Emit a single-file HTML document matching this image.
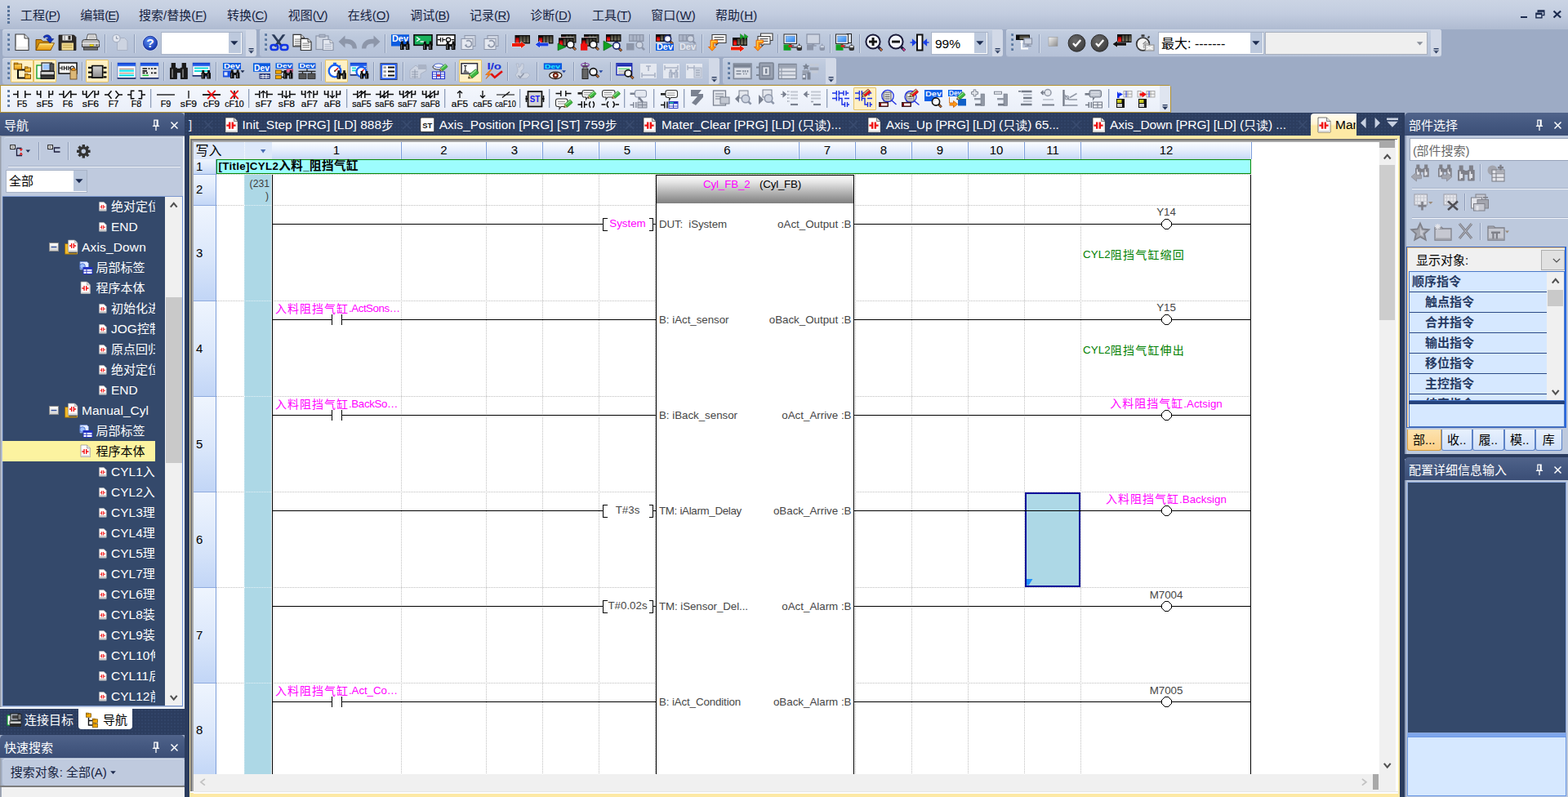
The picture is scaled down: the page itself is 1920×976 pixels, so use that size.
<!DOCTYPE html>
<html lang="zh"><head><meta charset="utf-8"><title>GX Works3</title><style>
html,body{margin:0;padding:0}
html{overflow:hidden;width:1920px;height:976px}
body{width:1920px;height:976px;overflow:hidden;position:relative;background:#9dabc5;font-family:"Liberation Sans","Noto Sans CJK SC",sans-serif}
.a{position:absolute;display:block}
.t{position:absolute;display:flex;align-items:center;white-space:pre;line-height:1}
.t span{display:block;line-height:1}
u{text-decoration:underline;text-underline-offset:1.5px;text-decoration-thickness:1px}
svg{overflow:visible}
</style></head><body><div class="a" style="left:0px;top:0px;width:1920px;height:36px;background:linear-gradient(#cbd4e4,#c3cde0 45%,#afbbd1)"></div><div class="a" style="left:8.9px;top:7px;width:2.8px;height:2.8px;background:#587399;"></div><div class="a" style="left:8.9px;top:12px;width:2.8px;height:2.8px;background:#587399;"></div><div class="a" style="left:8.9px;top:17px;width:2.8px;height:2.8px;background:#587399;"></div><div class="a" style="left:8.9px;top:21.5px;width:2.8px;height:2.8px;background:#587399;"></div><div class="a" style="left:8.9px;top:26px;width:2.8px;height:2.8px;background:#587399;"></div><div class="t" style="left:25px;top:8px;height:21px;color:#16223f"><span style="font-size:15px;">工程</span><span style="font-size:15px;letter-spacing:-0.57px;">(<u>P</u>)</span></div><div class="t" style="left:98.3px;top:8px;height:21px;color:#16223f"><span style="font-size:15px;">编辑</span><span style="font-size:15px;letter-spacing:-1px;">(<u>E</u>)</span></div><div class="t" style="left:170px;top:8px;height:21px;color:#16223f"><span style="font-size:15px;">搜索</span><span style="font-size:15px;letter-spacing:-0.01px;">/</span><span style="font-size:15px;">替换</span><span style="font-size:15px;letter-spacing:-0.01px;">(<u>F</u>)</span></div><div class="t" style="left:278px;top:8px;height:21px;color:#16223f"><span style="font-size:15px;">转换</span><span style="font-size:15px;letter-spacing:-0.51px;">(<u>C</u>)</span></div><div class="t" style="left:352.7px;top:8px;height:21px;color:#16223f"><span style="font-size:15px;">视图</span><span style="font-size:15px;letter-spacing:-0.57px;">(<u>V</u>)</span></div><div class="t" style="left:425.7px;top:8px;height:21px;color:#16223f"><span style="font-size:15px;">在线</span><span style="font-size:15px;letter-spacing:-0.02px;">(<u>O</u>)</span></div><div class="t" style="left:502.3px;top:8px;height:21px;color:#16223f"><span style="font-size:15px;">调试</span><span style="font-size:15px;letter-spacing:-0.77px;">(<u>B</u>)</span></div><div class="t" style="left:575px;top:8px;height:21px;color:#16223f"><span style="font-size:15px;">记录</span><span style="font-size:15px;letter-spacing:-0.61px;">(<u>R</u>)</span></div><div class="t" style="left:649.3px;top:8px;height:21px;color:#16223f"><span style="font-size:15px;">诊断</span><span style="font-size:15px;letter-spacing:-0.27px;">(<u>D</u>)</span></div><div class="t" style="left:725px;top:8px;height:21px;color:#16223f"><span style="font-size:15px;">工具</span><span style="font-size:15px;letter-spacing:-0.48px;">(<u>T</u>)</span></div><div class="t" style="left:797.3px;top:8px;height:21px;color:#16223f"><span style="font-size:15px;">窗口</span><span style="font-size:15px;letter-spacing:0.08px;">(<u>W</u>)</span></div><div class="t" style="left:876px;top:8px;height:21px;color:#16223f"><span style="font-size:15px;">帮助</span><span style="font-size:15px;letter-spacing:0.16px;">(<u>H</u>)</span></div><div class="a" style="left:1862px;top:20px;width:8px;height:2.4px;background:#1b2a4e;"></div><svg class="a" style="left:1880px;top:12px" width="12" height="11" fill="none" stroke="#1b2a4e" stroke-width="1.4"><path d="M3.2 3.2V1h7.6v5.6H8.4"/><path d="M3.2 1.8h7.6" stroke-width="2"/><rect x="0.9" y="4.2" width="7" height="5.6"/><path d="M.9 5h7" stroke-width="2"/></svg><svg class="a" style="left:1901px;top:12px" width="12" height="11" stroke="#1b2a4e" stroke-width="2.2"><path d="M1.5 1.5l8.6 8M10.1 1.5l-8.6 8"/></svg><svg width="0" height="0" style="position:absolute"><defs><linearGradient id="plcr" x1="0" y1="0" x2="0" y2="1"><stop offset="0" stop-color="#7a0000"/><stop offset=".55" stop-color="#f01010"/><stop offset="1" stop-color="#ff2a1a"/></linearGradient><linearGradient id="plcb" x1="0" y1="0" x2="0" y2="1"><stop offset="0" stop-color="#3c3a30"/><stop offset="1" stop-color="#77735f"/></linearGradient><linearGradient id="scr" x1="0" y1="0" x2="1" y2="1"><stop offset="0" stop-color="#8cc6ff"/><stop offset="1" stop-color="#2f86f0"/></linearGradient><linearGradient id="fold" x1="0" y1="0" x2="0" y2="1"><stop offset="0" stop-color="#ffd75e"/><stop offset="1" stop-color="#e69a12"/></linearGradient><radialGradient id="helpb" cx=".4" cy=".35" r=".7"><stop offset="0" stop-color="#5d8df5"/><stop offset="1" stop-color="#1232a8"/></radialGradient><radialGradient id="chk" cx=".4" cy=".35" r=".75"><stop offset="0" stop-color="#6a6a6a"/><stop offset="1" stop-color="#3a3a3a"/></radialGradient><linearGradient id="sq" x1="0" y1="0" x2="1" y2="1"><stop offset="0" stop-color="#f4f4f4"/><stop offset="1" stop-color="#8a8a8a"/></linearGradient><linearGradient id="sq2" x1="0" y1="0" x2="0" y2="1"><stop offset="0" stop-color="#d2d2d2"/><stop offset="1" stop-color="#8c8c8c"/></linearGradient><linearGradient id="sq3" x1="0" y1="0" x2="0" y2="1"><stop offset="0" stop-color="#ffffff"/><stop offset="1" stop-color="#cfcfcf"/></linearGradient><linearGradient id="wt" x1="0" y1="0" x2="0" y2="1"><stop offset="0" stop-color="#0a3ad0"/><stop offset="1" stop-color="#3f7cf2"/></linearGradient></defs></svg><div class="a" style="left:3px;top:36px;width:311px;height:32.5px;background:linear-gradient(#c5cfe1,#bcc8dc 30%,#b6c2d8);border-radius:3px;box-shadow:inset 0 1px #d0d9e8,0 1px #a7b3ca"></div><div class="a" style="left:301px;top:36px;width:13px;height:32.5px;background:#d2d9e7;border-radius:0 3px 3px 0"></div><svg class="a" style="left:303.5px;top:58.5px" width="8" height="7" viewBox="0 0 8 7"><rect x="0.6" y="0" width="6" height="1.3" fill="#27385c"/><path d="M0 2.6h7.2L3.6 6.4z" fill="#27385c"/><path d="M0.8 3L6.4 3" stroke="#e8ecf4" stroke-width="0.6" fill="none"/></svg><div class="a" style="left:318px;top:36px;width:910px;height:32.5px;background:linear-gradient(#c5cfe1,#bcc8dc 30%,#b6c2d8);border-radius:3px;box-shadow:inset 0 1px #d0d9e8,0 1px #a7b3ca"></div><div class="a" style="left:1215px;top:36px;width:13px;height:32.5px;background:#d2d9e7;border-radius:0 3px 3px 0"></div><svg class="a" style="left:1217.5px;top:58.5px" width="8" height="7" viewBox="0 0 8 7"><rect x="0.6" y="0" width="6" height="1.3" fill="#27385c"/><path d="M0 2.6h7.2L3.6 6.4z" fill="#27385c"/><path d="M0.8 3L6.4 3" stroke="#e8ecf4" stroke-width="0.6" fill="none"/></svg><div class="a" style="left:1232px;top:36px;width:533px;height:32.5px;background:linear-gradient(#c5cfe1,#bcc8dc 30%,#b6c2d8);border-radius:3px;box-shadow:inset 0 1px #d0d9e8,0 1px #a7b3ca"></div><div class="a" style="left:1752px;top:36px;width:13px;height:32.5px;background:#d2d9e7;border-radius:0 3px 3px 0"></div><svg class="a" style="left:1754.5px;top:58.5px" width="8" height="7" viewBox="0 0 8 7"><rect x="0.6" y="0" width="6" height="1.3" fill="#27385c"/><path d="M0 2.6h7.2L3.6 6.4z" fill="#27385c"/><path d="M0.8 3L6.4 3" stroke="#e8ecf4" stroke-width="0.6" fill="none"/></svg><div class="a" style="left:8.9px;top:41.3px;width:3px;height:3px;background:#587399;box-shadow:inset 1px 1px #6f8bb0"></div><div class="a" style="left:8.9px;top:47.2px;width:3px;height:3px;background:#587399;box-shadow:inset 1px 1px #6f8bb0"></div><div class="a" style="left:8.9px;top:53.1px;width:3px;height:3px;background:#587399;box-shadow:inset 1px 1px #6f8bb0"></div><div class="a" style="left:8.9px;top:59px;width:3px;height:3px;background:#587399;box-shadow:inset 1px 1px #6f8bb0"></div><div class="a" style="left:324px;top:41.3px;width:3px;height:3px;background:#587399;box-shadow:inset 1px 1px #6f8bb0"></div><div class="a" style="left:324px;top:47.2px;width:3px;height:3px;background:#587399;box-shadow:inset 1px 1px #6f8bb0"></div><div class="a" style="left:324px;top:53.1px;width:3px;height:3px;background:#587399;box-shadow:inset 1px 1px #6f8bb0"></div><div class="a" style="left:324px;top:59px;width:3px;height:3px;background:#587399;box-shadow:inset 1px 1px #6f8bb0"></div><div class="a" style="left:1238px;top:41.3px;width:3px;height:3px;background:#587399;box-shadow:inset 1px 1px #6f8bb0"></div><div class="a" style="left:1238px;top:47.2px;width:3px;height:3px;background:#587399;box-shadow:inset 1px 1px #6f8bb0"></div><div class="a" style="left:1238px;top:53.1px;width:3px;height:3px;background:#587399;box-shadow:inset 1px 1px #6f8bb0"></div><div class="a" style="left:1238px;top:59px;width:3px;height:3px;background:#587399;box-shadow:inset 1px 1px #6f8bb0"></div><svg class="a" style="left:13px;top:37px" width="28" height="32" viewBox="0 0 28 32"><path d="M6 5h11l5 5v14.5h-16z" fill="#fff" stroke="#3a3a3a" stroke-width="1.2"/><path d="M17 5v5h5" fill="#e6e6e6" stroke="#3a3a3a" stroke-width="0.96"/><rect x="6.6" y="20" width="14.8" height="4" fill="#e9e9e9" opacity="0.8"/></svg><svg class="a" style="left:41px;top:37px" width="28" height="32" viewBox="0 0 28 32"><path d="M3 11.5h6.5l2 2.2h9.5v10.8H3z" fill="#d08a08" stroke="#6b4208" stroke-width="0.9"/><path d="M3 24.5L7 15.8h18.5L21 24.5z" fill="url(#fold)" stroke="#7a4e06" stroke-width="0.9"/><path d="M7.6 17h16.2" fill="none" stroke="#fff0b0" stroke-width="0.9"/><path d="M12 8.2C15.5 4 21.2 5.4 22 10.6h2.8l-4.6 5.2-4.4-5.2h2.6C18 8 15.2 7.4 13.4 9.8z" fill="#1234c0" stroke="#061a70" stroke-width="0.6"/></svg><svg class="a" style="left:69px;top:37px" width="28" height="32" viewBox="0 0 28 32"><path d="M3 6h18.5L24 8.5V24.5H3z" fill="#2e2a27" stroke="#0c0a08" stroke-width="0.7"/><rect x="7.5" y="6.3" width="11.5" height="6.2" fill="#e6e6e6"/><rect x="9.5" y="6.3" width="1.4" height="6.2" fill="#9a9a9a"/><rect x="14.5" y="7" width="3" height="4.6" fill="#2e2a27"/><rect x="6.5" y="15.5" width="14.5" height="9" fill="#f3dc92"/><path d="M8 18.2L19.5 18.2" stroke="#b89b45" stroke-width="1" fill="none"/><path d="M8 21L19.5 21" stroke="#b89b45" stroke-width="1" fill="none"/></svg><svg class="a" style="left:97px;top:37px" width="28" height="32" viewBox="0 0 28 32"><path d="M9 11.5L10.5 5h10L21.5 11.5z" fill="#fff" stroke="#444" stroke-width="0.9"/><path d="M11.5 7.2L19.5 7.2" stroke="#888" stroke-width="0.9" fill="none"/><path d="M11.2 9.4L20 9.4" stroke="#888" stroke-width="0.9" fill="none"/><path d="M3.5 14.5Q3.5 11.5 6.5 11.5h15Q24.5 11.5 24.5 14.5v6h-21z" fill="#b9b9b9" stroke="#3c3c3c" stroke-width="1"/><rect x="3.5" y="15.5" width="21" height="1.5" fill="#e6e6e6"/><rect x="5.5" y="20.5" width="17" height="3.6" fill="#6c6c6c" stroke="#2c2c2c" stroke-width="0.8"/><rect x="13" y="17.6" width="4.4" height="2" fill="#ffe600" stroke="#8a7a00" stroke-width="0.5"/><circle cx="21.5" cy="18.3" r="1" fill="#444"/></svg><div class="a" style="left:128px;top:42px;width:1px;height:23px;background:#8f9db8"></div><div class="a" style="left:129px;top:42px;width:1px;height:23px;background:#d3dbe8"></div><svg class="a" style="left:133px;top:37px" width="28" height="32" viewBox="0 0 28 32"><path d="M10.5 9.5h9l3.5 3.5v11.5h-12.5z" fill="#cdd4e1" stroke="#aab3c5" stroke-width="1"/><circle cx="9.5" cy="10" r="4.6" fill="#e4e8f0" stroke="#aab3c5" stroke-width="1.4"/><path d="M9.5 7.5v2.8h2.4" fill="none" stroke="#8d96a9" stroke-width="1.1"/></svg><div class="a" style="left:164px;top:42px;width:1px;height:23px;background:#8f9db8"></div><div class="a" style="left:165px;top:42px;width:1px;height:23px;background:#d3dbe8"></div><svg class="a" style="left:169px;top:37px" width="28" height="32" viewBox="0 0 28 32"><circle cx="15" cy="15.8" r="9.8" fill="#d6e0f6"/><circle cx="15" cy="15.8" r="8.6" fill="url(#helpb)" stroke="#0d2488" stroke-width="0.8"/><text x="15" y="21.3" font-size="15.5" fill="#fff" font-family="Liberation Sans,sans-serif" font-weight="bold" text-anchor="middle">?</text></svg><div class="a" style="left:197px;top:38.5px;width:99.5px;height:28px;background:#fff;border:1px solid #a8b3c7;box-sizing:border-box"></div><div class="a" style="left:279.5px;top:40px;width:15.5px;height:25px;background:#bdc9dd"></div><svg class="a" style="left:282.3px;top:50px" width="10" height="6" viewBox="0 0 10 6"><path d="M.3 .3h9.2L4.9 5.2z" fill="#1b2a4e"/></svg><svg class="a" style="left:328px;top:37px" width="28" height="32" viewBox="0 0 28 32"><path d="M4.6 5.3L8 5.3 18.5 19.5 16 20.8z" fill="#2b3b58"/><path d="M21.4 5.3L18 5.3 7.5 19.5 10 20.8z" fill="#2b3b58"/><rect x="3.6" y="18" width="8.6" height="6" fill="none" stroke="#1236e6" stroke-width="2.6" rx="2.8"/><rect x="15.8" y="18" width="8.6" height="6" fill="none" stroke="#1236e6" stroke-width="2.6" rx="2.8"/></svg><svg class="a" style="left:356px;top:37px" width="28" height="32" viewBox="0 0 28 32"><path d="M3 5.3h9.5l4 4v10.5h-13.5z" fill="#fff" stroke="#333" stroke-width="1.2"/><path d="M12.5 5.3v4h4" fill="#e6e6e6" stroke="#333" stroke-width="0.96"/><path d="M5 11.1L14.5 11.1" stroke="#7a7a7a" stroke-width="1" fill="none"/><path d="M5 13.5L14.5 13.5" stroke="#7a7a7a" stroke-width="1" fill="none"/><path d="M5 15.9L14.5 15.9" stroke="#7a7a7a" stroke-width="1" fill="none"/><path d="M5 18.3L14.5 18.3" stroke="#7a7a7a" stroke-width="1" fill="none"/><path d="M12.3 10.3h8.7l4 4v10.2h-12.7z" fill="#fff" stroke="#333" stroke-width="1.2"/><path d="M21 10.3v4h4" fill="#e6e6e6" stroke="#333" stroke-width="0.96"/><path d="M14.3 16.1L23 16.1" stroke="#7a7a7a" stroke-width="1" fill="none"/><path d="M14.3 18.5L23 18.5" stroke="#7a7a7a" stroke-width="1" fill="none"/><path d="M14.3 20.9L23 20.9" stroke="#7a7a7a" stroke-width="1" fill="none"/></svg><svg class="a" style="left:384px;top:37px" width="28" height="32" viewBox="0 0 28 32"><rect x="3" y="7" width="15" height="16.5" fill="#cdd4e1" stroke="#8d96a9" stroke-width="1.2"/><rect x="7" y="5.2" width="7" height="3.4" fill="#aab3c5" stroke="#8d96a9" stroke-width="0.9"/><path d="M11.5 11.5h8.5l4 4v9h-12.5z" fill="#e4e8f0" stroke="#8d96a9" stroke-width="1.2"/><path d="M20 11.5v4h4" fill="#e6e6e6" stroke="#8d96a9" stroke-width="0.96"/><path d="M13.5 17.3L22 17.3" stroke="#aab3c5" stroke-width="1" fill="none"/><path d="M13.5 19.7L22 19.7" stroke="#aab3c5" stroke-width="1" fill="none"/><path d="M13.5 22.1L22 22.1" stroke="#aab3c5" stroke-width="1" fill="none"/></svg><svg class="a" style="left:412px;top:37px" width="28" height="32" viewBox="0 0 28 32"><path d="M2.5 14L10.5 6.5v4.3C19 10 25 14.5 25 22.5h-5.3C19.5 18 16 16 10.5 16.5V21.5z" fill="#8d96a9"/></svg><svg class="a" style="left:440px;top:37px" width="28" height="32" viewBox="0 0 28 32"><g transform="translate(28 0) scale(-1 1)"><path d="M2.5 14L10.5 6.5v4.3C19 10 25 14.5 25 22.5h-5.3C19.5 18 16 16 10.5 16.5V21.5z" fill="#8d96a9"/></g></svg><div class="a" style="left:471px;top:42px;width:1px;height:23px;background:#8f9db8"></div><div class="a" style="left:472px;top:42px;width:1px;height:23px;background:#d3dbe8"></div><svg class="a" style="left:476px;top:37px" width="28" height="32" viewBox="0 0 28 32"><rect x="3" y="5.3" width="22" height="9.5" fill="#0b5be0"/><text x="4" y="13.9" font-size="10" fill="#fff" font-family="Liberation Sans,sans-serif" font-weight="bold" textLength="20" lengthAdjust="spacingAndGlyphs">Dev</text><rect x="3" y="14" width="22" height="5.5" fill="#0b5be0"/><rect x="14.9" y="13.5" width="2.8" height="3.6" fill="#0c0c0c"/><rect x="21.7" y="13.5" width="2.8" height="3.6" fill="#0c0c0c"/><rect x="14" y="16.5" width="4.7" height="7.5" fill="#0c0c0c" rx="0.6"/><rect x="20.8" y="16.5" width="4.7" height="7.5" fill="#0c0c0c" rx="0.6"/><rect x="18.2" y="17.1" width="3.2" height="2.8" fill="#0c0c0c"/><rect x="15.2" y="17.5" width="0.9" height="5.5" fill="#8b8b8b"/><rect x="22" y="17.5" width="0.9" height="5.5" fill="#8b8b8b"/></svg><svg class="a" style="left:504px;top:37px" width="28" height="32" viewBox="0 0 28 32"><rect x="3" y="5.8" width="22" height="12.5" fill="#19b25c" stroke="#0c0c0c" stroke-width="1.6"/><path d="M6 8.5l3.8 2.5L6 13.5" fill="none" stroke="#fff" stroke-width="1.4"/><path d="M10.5 14L17 14" stroke="#fff" stroke-width="1.4" fill="none"/><rect x="14.9" y="13.5" width="2.8" height="3.6" fill="#0c0c0c"/><rect x="21.7" y="13.5" width="2.8" height="3.6" fill="#0c0c0c"/><rect x="14" y="16.5" width="4.7" height="7.5" fill="#0c0c0c" rx="0.6"/><rect x="20.8" y="16.5" width="4.7" height="7.5" fill="#0c0c0c" rx="0.6"/><rect x="18.2" y="17.1" width="3.2" height="2.8" fill="#0c0c0c"/><rect x="15.2" y="17.5" width="0.9" height="5.5" fill="#8b8b8b"/><rect x="22" y="17.5" width="0.9" height="5.5" fill="#8b8b8b"/></svg><svg class="a" style="left:532px;top:37px" width="28" height="32" viewBox="0 0 28 32"><rect x="3" y="5.8" width="22" height="12.5" fill="#fff" stroke="#0c0c0c" stroke-width="1.6"/><path d="M4 11.7h3.5M7.5 9v5.4M10 9v5.4M10 11.7h3.5M20.5 11.7H24" fill="none" stroke="#0c0c0c" stroke-width="1.2"/><circle cx="17" cy="11.7" r="2.6" fill="none" stroke="#0c0c0c" stroke-width="1.2"/><rect x="14.9" y="13.5" width="2.8" height="3.6" fill="#0c0c0c"/><rect x="21.7" y="13.5" width="2.8" height="3.6" fill="#0c0c0c"/><rect x="14" y="16.5" width="4.7" height="7.5" fill="#0c0c0c" rx="0.6"/><rect x="20.8" y="16.5" width="4.7" height="7.5" fill="#0c0c0c" rx="0.6"/><rect x="18.2" y="17.1" width="3.2" height="2.8" fill="#0c0c0c"/><rect x="15.2" y="17.5" width="0.9" height="5.5" fill="#8b8b8b"/><rect x="22" y="17.5" width="0.9" height="5.5" fill="#8b8b8b"/></svg><svg class="a" style="left:560px;top:37px" width="28" height="32" viewBox="0 0 28 32"><rect x="9" y="6.5" width="13" height="13" fill="#cdd4e1" stroke="#8d96a9" stroke-width="1"/><rect x="5" y="10.5" width="14" height="13" fill="#e4e8f0" stroke="#8d96a9" stroke-width="1"/><path d="M11 13.5a4 4 0 1 1 -1 5l1.6-.8" fill="none" stroke="#8d96a9" stroke-width="1.6"/></svg><svg class="a" style="left:588px;top:37px" width="28" height="32" viewBox="0 0 28 32"><rect x="9" y="6.5" width="13" height="13" fill="#cdd4e1" stroke="#8d96a9" stroke-width="1"/><rect x="5" y="10.5" width="14" height="13" fill="#e4e8f0" stroke="#8d96a9" stroke-width="1"/><path d="M11 13.5a4 4 0 1 1 -1 5l1.6-.8" fill="none" stroke="#8d96a9" stroke-width="1.6"/></svg><div class="a" style="left:619px;top:42px;width:1px;height:23px;background:#8f9db8"></div><div class="a" style="left:620px;top:42px;width:1px;height:23px;background:#d3dbe8"></div><svg class="a" style="left:624px;top:37px" width="28" height="32" viewBox="0 0 28 32"><rect x="6.5" y="6" width="18.5" height="10.5" fill="#0c0c0c"/><rect x="7.4" y="9" width="4.2" height="6.7" fill="url(#plcr)"/><rect x="12.4" y="7.2" width="3.2" height="7.9" fill="url(#plcb)"/><rect x="16.5" y="7.2" width="3.2" height="7.9" fill="url(#plcb)"/><rect x="20.6" y="7.2" width="3.2" height="7.9" fill="url(#plcb)"/><path d="M3 16.1h11v-2.1l5.5 4l-5.5 4v-2.1h-11z" fill="#f01a00" stroke="#fff" stroke-width="0.9" paint-order="stroke"/></svg><svg class="a" style="left:652px;top:37px" width="28" height="32" viewBox="0 0 28 32"><rect x="7" y="6" width="18.5" height="10.5" fill="#0c0c0c"/><rect x="7.9" y="9" width="4.2" height="6.7" fill="url(#plcr)"/><rect x="12.9" y="7.2" width="3.2" height="7.9" fill="url(#plcb)"/><rect x="17" y="7.2" width="3.2" height="7.9" fill="url(#plcb)"/><rect x="21.1" y="7.2" width="3.2" height="7.9" fill="url(#plcb)"/><path d="M19.5 15.6h-10.5v-2.1l-5.5 4l5.5 4v-2.1h10.5z" fill="#1a40e6" stroke="#fff" stroke-width="0.9" paint-order="stroke"/></svg><svg class="a" style="left:680px;top:37px" width="28" height="32" viewBox="0 0 28 32"><rect x="7" y="5" width="18.5" height="10.5" fill="#0c0c0c"/><rect x="7.9" y="8" width="4.2" height="6.7" fill="url(#plcr)"/><rect x="12.9" y="6.2" width="3.2" height="7.9" fill="url(#plcb)"/><rect x="17" y="6.2" width="3.2" height="7.9" fill="url(#plcb)"/><rect x="21.1" y="6.2" width="3.2" height="7.9" fill="url(#plcb)"/><rect x="4.5" y="8.3" width="18" height="1.1" fill="#e8e8e8"/><rect x="4" y="9.3" width="18.5" height="10.5" fill="#0c0c0c"/><rect x="4.9" y="12.3" width="4.2" height="6.7" fill="url(#plcr)"/><rect x="9.9" y="10.5" width="3.2" height="7.9" fill="url(#plcb)"/><rect x="14" y="10.5" width="3.2" height="7.9" fill="url(#plcb)"/><rect x="18.1" y="10.5" width="3.2" height="7.9" fill="url(#plcb)"/><path d="M3 16.2L13 20.5 3 24.8z" fill="#10a020" stroke="#0a5a10" stroke-width="0.6"/><path d="M21.6 20.6L25 24" stroke="#2a1a10" stroke-width="3" fill="none"/><path d="M22.4 21.4L24.8 23.8" stroke="#c4733a" stroke-width="1.7" fill="none"/><circle cx="18.5" cy="17.5" r="4.3" fill="#fff" stroke="#111" stroke-width="1.6"/><path d="M16.13 17.5a2.37 2.37 0 0 1 2.37 -2.37" fill="none" stroke="#c9d2e0" stroke-width="0.9"/></svg><svg class="a" style="left:708px;top:37px" width="28" height="32" viewBox="0 0 28 32"><rect x="7" y="5" width="18.5" height="10.5" fill="#0c0c0c"/><rect x="7.9" y="8" width="4.2" height="6.7" fill="url(#plcr)"/><rect x="12.9" y="6.2" width="3.2" height="7.9" fill="url(#plcb)"/><rect x="17" y="6.2" width="3.2" height="7.9" fill="url(#plcb)"/><rect x="21.1" y="6.2" width="3.2" height="7.9" fill="url(#plcb)"/><rect x="4.5" y="8.3" width="18" height="1.1" fill="#e8e8e8"/><rect x="4" y="9.3" width="18.5" height="10.5" fill="#0c0c0c"/><rect x="4.9" y="12.3" width="4.2" height="6.7" fill="url(#plcr)"/><rect x="9.9" y="10.5" width="3.2" height="7.9" fill="url(#plcb)"/><rect x="14" y="10.5" width="3.2" height="7.9" fill="url(#plcb)"/><rect x="18.1" y="10.5" width="3.2" height="7.9" fill="url(#plcb)"/><rect x="3" y="16.5" width="8.3" height="8.2" fill="#f01010"/><path d="M21.6 20.6L25 24" stroke="#2a1a10" stroke-width="3" fill="none"/><path d="M22.4 21.4L24.8 23.8" stroke="#c4733a" stroke-width="1.7" fill="none"/><circle cx="18.5" cy="17.5" r="4.3" fill="#fff" stroke="#111" stroke-width="1.6"/><path d="M16.13 17.5a2.37 2.37 0 0 1 2.37 -2.37" fill="none" stroke="#c9d2e0" stroke-width="0.9"/></svg><svg class="a" style="left:736px;top:37px" width="28" height="32" viewBox="0 0 28 32"><rect x="6" y="5" width="18.5" height="9" fill="#0c0c0c"/><rect x="6.9" y="8" width="4.2" height="5.2" fill="url(#plcr)"/><rect x="11.9" y="6.2" width="3.2" height="6.4" fill="url(#plcb)"/><rect x="16" y="6.2" width="3.2" height="6.4" fill="url(#plcb)"/><rect x="20.1" y="6.2" width="3.2" height="6.4" fill="url(#plcb)"/><path d="M3 13L14 19 3 25z" fill="#10a020" stroke="#0a5a10" stroke-width="0.6"/><path d="M21.75 21.95L25.15 25.35" stroke="#2a1a10" stroke-width="3" fill="none"/><path d="M22.55 22.75L24.95 25.15" stroke="#c4733a" stroke-width="1.7" fill="none"/><circle cx="18.8" cy="19" r="4.1" fill="#fff" stroke="#1c2a6e" stroke-width="1.6"/><path d="M16.55 19a2.25 2.25 0 0 1 2.25 -2.25" fill="none" stroke="#c9d2e0" stroke-width="0.9"/></svg><svg class="a" style="left:764px;top:37px" width="28" height="32" viewBox="0 0 28 32"><rect x="6" y="5" width="18.5" height="9" fill="#8d96a9"/><rect x="11.8" y="6.2" width="3.1" height="6.4" fill="#aab3c5"/><rect x="15.9" y="6.2" width="3.1" height="6.4" fill="#aab3c5"/><rect x="20" y="6.2" width="3.1" height="6.4" fill="#aab3c5"/><rect x="7" y="6.2" width="3.6" height="6.4" fill="#aab3c5"/><rect x="3" y="16" width="9.5" height="8.5" fill="#8d96a9"/><path d="M21.88 20.88L25.08 24.08" stroke="#8d96a9" stroke-width="2.6" fill="none"/><circle cx="19" cy="18" r="4" fill="#cdd4e1" stroke="#8d96a9" stroke-width="1.5"/></svg><div class="a" style="left:795px;top:42px;width:1px;height:23px;background:#8f9db8"></div><div class="a" style="left:796px;top:42px;width:1px;height:23px;background:#d3dbe8"></div><svg class="a" style="left:800px;top:37px" width="28" height="32" viewBox="0 0 28 32"><rect x="3" y="5" width="18.5" height="9" fill="#0c0c0c"/><rect x="3.9" y="8" width="4.2" height="5.2" fill="url(#plcr)"/><rect x="8.9" y="6.2" width="3.2" height="6.4" fill="url(#plcb)"/><rect x="13" y="6.2" width="3.2" height="6.4" fill="url(#plcb)"/><rect x="17.1" y="6.2" width="3.2" height="6.4" fill="url(#plcb)"/><path d="M20.45 13.45L23.85 16.85" stroke="#2a1a10" stroke-width="3" fill="none"/><path d="M21.25 14.25L23.65 16.65" stroke="#c4733a" stroke-width="1.7" fill="none"/><circle cx="17.5" cy="10.5" r="4.1" fill="#fff" stroke="#1c2a6e" stroke-width="1.6"/><path d="M15.25 10.5a2.25 2.25 0 0 1 2.25 -2.25" fill="none" stroke="#c9d2e0" stroke-width="0.9"/><rect x="3" y="16.5" width="22" height="8.5" fill="#0b5be0"/><text x="4" y="24.1" font-size="10" fill="#fff" font-family="Liberation Sans,sans-serif" font-weight="bold" textLength="20" lengthAdjust="spacingAndGlyphs">Dev</text></svg><svg class="a" style="left:828px;top:37px" width="28" height="32" viewBox="0 0 28 32"><rect x="3" y="5" width="18.5" height="9" fill="#8d96a9"/><rect x="8.8" y="6.2" width="3.1" height="6.4" fill="#aab3c5"/><rect x="12.9" y="6.2" width="3.1" height="6.4" fill="#aab3c5"/><rect x="17" y="6.2" width="3.1" height="6.4" fill="#aab3c5"/><rect x="4" y="6.2" width="3.6" height="6.4" fill="#aab3c5"/><path d="M20.38 13.38L23.58 16.58" stroke="#8d96a9" stroke-width="2.6" fill="none"/><circle cx="17.5" cy="10.5" r="4" fill="#cdd4e1" stroke="#8d96a9" stroke-width="1.5"/><rect x="3" y="16.5" width="22" height="8.5" fill="#aab3c5"/><text x="4" y="24.1" font-size="10" fill="#e4e8f0" font-family="Liberation Sans,sans-serif" font-weight="bold" textLength="20" lengthAdjust="spacingAndGlyphs">Dev</text></svg><div class="a" style="left:859px;top:42px;width:1px;height:23px;background:#8f9db8"></div><div class="a" style="left:860px;top:42px;width:1px;height:23px;background:#d3dbe8"></div><svg class="a" style="left:864px;top:37px" width="28" height="32" viewBox="0 0 28 32"><path d="M8 5.5h17v10h-9.5l-2.6 2.6v-2.6h-4.9z" fill="#fff" stroke="#3a3a3a" stroke-width="1.1"/><path d="M10.5 8.7L22.5 8.7" stroke="#555" stroke-width="1.3" fill="none"/><path d="M10.5 11.6L22.5 11.6" stroke="#555" stroke-width="1.3" fill="none"/><path d="M14.5 12.2H6v8.3H3.4l4.6 4.7 4.6-4.7H10v-4.6h4.5z" fill="#ff9a10" stroke="#e05a00" stroke-width="0.8"/><path d="M7.2 13.6h6M7.4 13.6v7.5" fill="none" stroke="#ffd84a" stroke-width="1"/></svg><svg class="a" style="left:892px;top:37px" width="28" height="32" viewBox="0 0 28 32"><rect x="5" y="9" width="18" height="10" fill="#0c0c0c"/><rect x="5.9" y="12" width="4.2" height="6.2" fill="url(#plcr)"/><rect x="10.9" y="10.2" width="3.2" height="7.4" fill="url(#plcb)"/><rect x="15" y="10.2" width="3.2" height="7.4" fill="url(#plcb)"/><rect x="19.1" y="10.2" width="3.2" height="7.4" fill="url(#plcb)"/><path d="M3 20.6h11v-2.1l5.5 4l-5.5 4v-2.1h-11z" fill="#f01a00" stroke="#fff" stroke-width="0.9" paint-order="stroke"/><path d="M14.5 4.5l4.6 3.4-4.6 3.4zM19.5 4.5l4.6 3.4-4.6 3.4z" fill="#14a824" stroke="#0a6a14" stroke-width="0.4"/></svg><svg class="a" style="left:920px;top:37px" width="28" height="32" viewBox="0 0 28 32"><path d="M11.5 4h14.5v8.5h-7l-2.6 2.6v-2.6h-4.9z" fill="#fff" stroke="#3a3a3a" stroke-width="1.1"/><path d="M8 7.5h15v9.5h-7.5l-2.6 2.6v-2.6h-4.9z" fill="#fff" stroke="#3a3a3a" stroke-width="1.1"/><path d="M10.5 10.6L20.5 10.6" stroke="#555" stroke-width="1.2" fill="none"/><path d="M10.5 13.4L20.5 13.4" stroke="#555" stroke-width="1.2" fill="none"/><path d="M14.5 12.2H6v8.3H3.4l4.6 4.7 4.6-4.7H10v-4.6h4.5z" fill="#ff9a10" stroke="#e05a00" stroke-width="0.8"/><path d="M7.2 13.6h6M7.4 13.6v7.5" fill="none" stroke="#ffd84a" stroke-width="1"/></svg><div class="a" style="left:951.5px;top:42px;width:1px;height:23px;background:#8f9db8"></div><div class="a" style="left:952.5px;top:42px;width:1px;height:23px;background:#d3dbe8"></div><svg class="a" style="left:956px;top:37px" width="28" height="32" viewBox="0 0 28 32"><rect x="4" y="5" width="15.5" height="11.5" fill="#f4f6fb" stroke="#2a2a2a" stroke-width="1"/><rect x="6.2" y="7.2" width="11.1" height="7.1" fill="url(#scr)" stroke="#5a7ab0" stroke-width="0.5"/><rect x="10.25" y="17" width="3" height="1.6" fill="#555"/><rect x="7.25" y="18.3" width="9" height="1.3" fill="#444"/><path d="M3.5 17.5h8.5l-2 2.5h2.5v4.8h-9z" fill="#10a020"/><rect x="9.5" y="18.2" width="4.5" height="2.6" fill="#e02020"/><rect x="19.5" y="18.5" width="6.5" height="6.5" fill="#333" rx="2"/><rect x="20.5" y="19" width="4.5" height="2.2" fill="#ddd" rx="1"/><path d="M22.7 16.5L22.7 19" stroke="#333" stroke-width="1" fill="none"/><path d="M13 21L19.5 21" stroke="#222" stroke-width="1.2" fill="none"/></svg><svg class="a" style="left:984px;top:37px" width="28" height="32" viewBox="0 0 28 32"><rect x="4" y="5" width="15.5" height="11.5" fill="#cdd4e1" stroke="#8d96a9" stroke-width="1.3"/><rect x="10.25" y="16.5" width="3" height="2" fill="#8d96a9"/><rect x="7.75" y="18.3" width="8" height="1.4" fill="#8d96a9"/><rect x="4" y="17.5" width="8" height="7" fill="#8d96a9"/><rect x="19.5" y="18.5" width="6.5" height="6.5" fill="#8d96a9" rx="2"/><rect x="20.5" y="19" width="4.5" height="2.2" fill="#cdd4e1" rx="1"/><path d="M22.7 16.5L22.7 19" stroke="#8d96a9" stroke-width="1" fill="none"/></svg><div class="a" style="left:1015.5px;top:42px;width:1px;height:23px;background:#8f9db8"></div><div class="a" style="left:1016.5px;top:42px;width:1px;height:23px;background:#d3dbe8"></div><svg class="a" style="left:1020px;top:37px" width="28" height="32" viewBox="0 0 28 32"><rect x="17" y="4.5" width="5.5" height="11" fill="#dfe6f5" stroke="#222" stroke-width="1"/><rect x="3.5" y="5" width="15" height="11.5" fill="#f4f6fb" stroke="#2a2a2a" stroke-width="1"/><rect x="5.7" y="7.2" width="10.6" height="7.1" fill="url(#scr)" stroke="#5a7ab0" stroke-width="0.5"/><rect x="9.5" y="17" width="3" height="1.6" fill="#555"/><rect x="6.5" y="18.3" width="9" height="1.3" fill="#444"/><path d="M3.5 17.5h8.5l-2 2.5h2.5v4.8h-9z" fill="#10a020"/><rect x="9.5" y="18.2" width="4.5" height="2.6" fill="#e02020"/><rect x="19.5" y="18.5" width="6.5" height="6.5" fill="#333" rx="2"/><rect x="20.5" y="19" width="4.5" height="2.2" fill="#ddd" rx="1"/><path d="M22.7 16.5L22.7 19" stroke="#333" stroke-width="1" fill="none"/><path d="M13 21L19.5 21" stroke="#222" stroke-width="1.2" fill="none"/></svg><div class="a" style="left:1051.5px;top:42px;width:1px;height:23px;background:#8f9db8"></div><div class="a" style="left:1052.5px;top:42px;width:1px;height:23px;background:#d3dbe8"></div><svg class="a" style="left:1056px;top:37px" width="28" height="32" viewBox="0 0 28 32"><path d="M19.5 20.5L24 25" stroke="#1b1b3a" stroke-width="3.2" fill="none"/><path d="M21.5 22.5L24 25" stroke="#c4733a" stroke-width="2" fill="none"/><circle cx="13" cy="14" r="8.6" fill="#f4f6fb" stroke="#1b1b3a" stroke-width="2"/><rect x="8" y="12.6" width="10" height="2.9" fill="#151515"/><rect x="11.6" y="9" width="2.9" height="10" fill="#151515"/></svg><svg class="a" style="left:1084px;top:37px" width="28" height="32" viewBox="0 0 28 32"><path d="M19.5 20.5L24 25" stroke="#1b1b3a" stroke-width="3.2" fill="none"/><path d="M21.5 22.5L24 25" stroke="#d0408a" stroke-width="2" fill="none"/><circle cx="13" cy="14" r="8.6" fill="#f4f6fb" stroke="#1b1b3a" stroke-width="2"/><rect x="8" y="12.6" width="10" height="2.9" fill="#151515"/></svg><svg class="a" style="left:1112px;top:37px" width="28" height="32" viewBox="0 0 28 32"><rect x="11" y="5.5" width="6.5" height="19" fill="#fff" stroke="#111" stroke-width="2"/><path d="M2.5 15h5.5M5.6 11.8L9.4 15l-3.8 3.2zM25.5 15H20M22.4 11.8L18.6 15l3.8 3.2z" fill="#1a40e6" stroke="#1a40e6" stroke-width="1.4"/></svg><div class="a" style="left:1140px;top:38.5px;width:69.5px;height:28px;background:#fff;border:1px solid #a8b3c7;box-sizing:border-box"></div><div class="a" style="left:1192.5px;top:40px;width:15.5px;height:25px;background:#bdc9dd"></div><svg class="a" style="left:1195.3px;top:50px" width="10" height="6" viewBox="0 0 10 6"><path d="M.3 .3h9.2L4.9 5.2z" fill="#1b2a4e"/></svg><div class="t" style="left:1145px;top:42.75px;height:21.5px;color:#000"><span style="font-size:15.5px;">99%</span></div><svg class="a" style="left:1240px;top:37px" width="28" height="32" viewBox="0 0 28 32"><rect x="4" y="5.5" width="17" height="6.5" fill="#0c0c0c"/><rect x="8.5" y="6.6" width="11.5" height="4.3" fill="url(#plcb)"/><rect x="14" y="10" width="9.5" height="7" fill="#cdd4e1" stroke="#8d96a9" stroke-width="1.3"/><rect x="17.25" y="17" width="3" height="2" fill="#8d96a9"/><rect x="14.75" y="18.8" width="8" height="1.4" fill="#8d96a9"/><path d="M11 12.5v10h8" fill="none" stroke="#fff" stroke-width="1.8"/><path d="M8.8 15l2.2-3 2.2 3z" fill="#fff"/></svg><div class="a" style="left:1271.5px;top:42px;width:1px;height:23px;background:#8f9db8"></div><div class="a" style="left:1272.5px;top:42px;width:1px;height:23px;background:#d3dbe8"></div><svg class="a" style="left:1276px;top:37px" width="28" height="32" viewBox="0 0 28 32"><rect x="8" y="8.5" width="11" height="11" fill="url(#sq)" stroke="#9a9a9a" stroke-width="0.6"/></svg><svg class="a" style="left:1304px;top:37px" width="28" height="32" viewBox="0 0 28 32"><circle cx="14.5" cy="15.8" r="10.4" fill="url(#chk)" stroke="#2c2c2c" stroke-width="1"/><path d="M10 16l3 3.3 6.2-7.4" fill="none" stroke="#fff" stroke-width="2.3"/></svg><svg class="a" style="left:1332px;top:37px" width="28" height="32" viewBox="0 0 28 32"><circle cx="14.5" cy="15.8" r="10.4" fill="url(#chk)" stroke="#2c2c2c" stroke-width="1"/><path d="M10 16l3 3.3 6.2-7.4" fill="none" stroke="#fff" stroke-width="2.3"/></svg><svg class="a" style="left:1360px;top:37px" width="28" height="32" viewBox="0 0 28 32"><rect x="8" y="5" width="17.5" height="10" fill="#0c0c0c"/><rect x="8.9" y="8" width="4.2" height="6.2" fill="url(#plcr)"/><rect x="13.9" y="6.2" width="3.2" height="7.4" fill="url(#plcb)"/><rect x="18" y="6.2" width="3.2" height="7.4" fill="url(#plcb)"/><rect x="22.1" y="6.2" width="3.2" height="7.4" fill="url(#plcb)"/><path d="M19 15.3h-11v-2.05l-5.5 3.75l5.5 3.75v-2.05h11z" fill="#111" stroke="#eee" stroke-width="0.9" paint-order="stroke"/></svg><svg class="a" style="left:1388px;top:37px" width="28" height="32" viewBox="0 0 28 32"><circle cx="11.5" cy="17" r="7.8" fill="#f2f2f2" stroke="#3a3a3a" stroke-width="1.8"/><rect x="9.5" y="5.3" width="4" height="2.6" fill="#3a3a3a"/><path d="M17.5 9.5L19.5 7.5" stroke="#3a3a3a" stroke-width="1.8" fill="none"/><path d="M11.5 17l4-3.5" fill="none" stroke="#888" stroke-width="1.3"/><path d="M13 22a4 4 0 0 1 6-5" fill="none" stroke="#aaa" stroke-width="1.6"/><rect x="14.5" y="18" width="10.5" height="7" fill="#d9d9d9" stroke="#888" stroke-width="0.9"/><path d="M16 19.5l7.5 4M23.5 19.5l-7.5 4" fill="none" stroke="#fff" stroke-width="1.2"/></svg><div class="a" style="left:1418px;top:38.5px;width:129.5px;height:28px;background:#fff;border:1px solid #a8b3c7;box-sizing:border-box"></div><div class="a" style="left:1530.5px;top:40px;width:15.5px;height:25px;background:#bdc9dd"></div><svg class="a" style="left:1533.3px;top:50px" width="10" height="6" viewBox="0 0 10 6"><path d="M.3 .3h9.2L4.9 5.2z" fill="#1b2a4e"/></svg><div class="t" style="left:1422px;top:42.5px;height:22px;color:#000"><span style="font-size:16px;">最大</span><span style="font-size:16px;">: -------</span></div><div class="a" style="left:1549px;top:38.5px;width:199px;height:28px;background:#efefef;border:1px solid #a9b0bd;box-sizing:border-box"></div><svg class="a" style="left:1733.8px;top:50.5px" width="10" height="6" viewBox="0 0 10 6"><path d="M.8 .3h7.6L4.6 4.4z" fill="#8a8f9a"/></svg><div class="a" style="left:3px;top:71px;width:878px;height:32px;background:linear-gradient(#c5cfe1,#bcc8dc 30%,#b6c2d8);border-radius:3px;box-shadow:inset 0 1px #d0d9e8,0 1px #a7b3ca"></div><div class="a" style="left:868px;top:71px;width:13px;height:32px;background:#d2d9e7;border-radius:0 3px 3px 0"></div><svg class="a" style="left:870.5px;top:93.5px" width="8" height="7" viewBox="0 0 8 7"><rect x="0.6" y="0" width="6" height="1.3" fill="#27385c"/><path d="M0 2.6h7.2L3.6 6.4z" fill="#27385c"/><path d="M0.8 3L6.4 3" stroke="#e8ecf4" stroke-width="0.6" fill="none"/></svg><div class="a" style="left:885px;top:71px;width:139px;height:32px;background:linear-gradient(#c5cfe1,#bcc8dc 30%,#b6c2d8);border-radius:3px;box-shadow:inset 0 1px #d0d9e8,0 1px #a7b3ca"></div><div class="a" style="left:1011px;top:71px;width:13px;height:32px;background:#d2d9e7;border-radius:0 3px 3px 0"></div><svg class="a" style="left:1013.5px;top:93.5px" width="8" height="7" viewBox="0 0 8 7"><rect x="0.6" y="0" width="6" height="1.3" fill="#27385c"/><path d="M0 2.6h7.2L3.6 6.4z" fill="#27385c"/><path d="M0.8 3L6.4 3" stroke="#e8ecf4" stroke-width="0.6" fill="none"/></svg><div class="a" style="left:8.9px;top:76.1px;width:3px;height:3px;background:#587399;box-shadow:inset 1px 1px #6f8bb0"></div><div class="a" style="left:8.9px;top:82px;width:3px;height:3px;background:#587399;box-shadow:inset 1px 1px #6f8bb0"></div><div class="a" style="left:8.9px;top:87.9px;width:3px;height:3px;background:#587399;box-shadow:inset 1px 1px #6f8bb0"></div><div class="a" style="left:8.9px;top:93.8px;width:3px;height:3px;background:#587399;box-shadow:inset 1px 1px #6f8bb0"></div><div class="a" style="left:891px;top:76.1px;width:3px;height:3px;background:#587399;box-shadow:inset 1px 1px #6f8bb0"></div><div class="a" style="left:891px;top:82px;width:3px;height:3px;background:#587399;box-shadow:inset 1px 1px #6f8bb0"></div><div class="a" style="left:891px;top:87.9px;width:3px;height:3px;background:#587399;box-shadow:inset 1px 1px #6f8bb0"></div><div class="a" style="left:891px;top:93.8px;width:3px;height:3px;background:#587399;box-shadow:inset 1px 1px #6f8bb0"></div><div class="a" style="left:13px;top:73px;width:27.5px;height:27.5px;background:#fff0c4;border:1px solid #e5c365;box-sizing:border-box;border-radius:1px"></div><div class="a" style="left:41.3px;top:73px;width:27.5px;height:27.5px;background:#fff0c4;border:1px solid #e5c365;box-sizing:border-box;border-radius:1px"></div><svg class="a" style="left:13px;top:71px" width="28" height="32" viewBox="0 0 28 32"><path d="M9 14v10.4h9M9 14.5h9" fill="none" stroke="#0a0a0a" stroke-width="2"/><rect x="4.2" y="7.2" width="9.4" height="6.8" fill="url(#fold)" stroke="#7a4a00" stroke-width="0.9"/><rect x="4.2" y="6" width="4.7" height="1.8" fill="#f5b010" stroke="#7a4a00" stroke-width="0.7"/><rect x="17.5" y="12" width="7" height="5" fill="url(#fold)" stroke="#7a4a00" stroke-width="0.9"/><rect x="17.5" y="10.8" width="3.5" height="1.8" fill="#f5b010" stroke="#7a4a00" stroke-width="0.7"/><rect x="17.5" y="20.4" width="7" height="5" fill="url(#fold)" stroke="#7a4a00" stroke-width="0.9"/><rect x="17.5" y="19.2" width="3.5" height="1.8" fill="#f5b010" stroke="#7a4a00" stroke-width="0.7"/></svg><svg class="a" style="left:41px;top:71px" width="28" height="32" viewBox="0 0 28 32"><rect x="4" y="9" width="8" height="16" fill="#fff" stroke="#12a030" stroke-width="1.4"/><rect x="10" y="6" width="12.5" height="9.5" fill="#dfe8f7" stroke="#333" stroke-width="1.3"/><rect x="11.8" y="7.8" width="9" height="6" fill="#9ec8ff"/><rect x="9" y="16.5" width="16.5" height="4.5" fill="#cfcfcf" stroke="#222" stroke-width="1"/><rect x="9" y="21" width="16.5" height="4.5" fill="#3a3a3a" stroke="#111" stroke-width="1"/><rect x="20" y="7" width="5" height="9" fill="#555" stroke="#111" stroke-width="0.8"/></svg><svg class="a" style="left:69px;top:71px" width="28" height="32" viewBox="0 0 28 32"><rect x="3" y="6" width="22" height="13" fill="#fff" stroke="#0c0c0c" stroke-width="1.5"/><path d="M4 12.3h3M7 9.7v5.2M9.4 9.7v5.2M9.4 12.3h3.3M12.7 9.7v5.2M15 9.7v5.2M15 12.3h2" fill="none" stroke="#0c0c0c" stroke-width="1.1"/><circle cx="19.5" cy="12.3" r="2.3" fill="none" stroke="#0c0c0c" stroke-width="1.1"/><rect x="17" y="14.5" width="8" height="11.5" fill="#dcb878" stroke="#6b4a20" stroke-width="0.9"/><rect x="19" y="12.6" width="4" height="2.8" fill="#f08a00" stroke="#6b4a20" stroke-width="0.6"/></svg><div class="a" style="left:100px;top:76px;width:1px;height:23px;background:#8f9db8"></div><div class="a" style="left:101px;top:76px;width:1px;height:23px;background:#d3dbe8"></div><div class="a" style="left:105px;top:73px;width:27.5px;height:27.5px;background:#fff0c4;border:1px solid #e5c365;box-sizing:border-box;border-radius:1px"></div><svg class="a" style="left:105px;top:71px" width="28" height="32" viewBox="0 0 28 32"><path d="M3 11.9h4M3 17.6h4M3 23.3h4M21.5 11.9h4M21.5 17.6h4M21.5 23.3h4" fill="none" stroke="#0a0a0a" stroke-width="2.3"/><rect x="7" y="8.7" width="14.5" height="16.3" fill="#0a0a0a" rx="0.6"/><rect x="8.6" y="10.3" width="11.3" height="13" fill="url(#sq2)"/></svg><div class="a" style="left:136px;top:76px;width:1px;height:23px;background:#8f9db8"></div><div class="a" style="left:137px;top:76px;width:1px;height:23px;background:#d3dbe8"></div><svg class="a" style="left:141px;top:71px" width="28" height="32" viewBox="0 0 28 32"><rect x="3" y="6" width="22" height="19" fill="#fff" stroke="#5c74b8" stroke-width="0.7"/><rect x="3" y="6" width="22" height="4.2" fill="url(#wt)"/><rect x="2.7" y="24" width="22.6" height="1.6" fill="#1c2d6b"/><path d="M5 13.4L23 13.4" stroke="#a0705a" stroke-width="0.9" fill="none"/><rect x="5" y="14.6" width="18" height="2.2" fill="#10e0e8"/><path d="M5 18.6L23 18.6" stroke="#a0705a" stroke-width="0.9" fill="none"/><rect x="5" y="20.2" width="18" height="2.2" fill="#10e0e8"/></svg><svg class="a" style="left:169px;top:71px" width="28" height="32" viewBox="0 0 28 32"><rect x="3" y="6" width="22" height="19" fill="#fff" stroke="#5c74b8" stroke-width="0.7"/><rect x="3" y="6" width="22" height="4.2" fill="url(#wt)"/><rect x="2.7" y="24" width="22.6" height="1.6" fill="#1c2d6b"/><rect x="3.4" y="10.2" width="21.2" height="13.6" fill="#ececec"/><path d="M5.5 13h5.5M12.5 13h2M16 13h2M19.5 13h3M5.5 15.8h5.5M5.5 18.4h3M10 18.4h2M16 18.4h2M19.5 18.4h3" fill="none" stroke="#111" stroke-width="1.7"/><rect x="5.5" y="20.6" width="7.5" height="1.5" fill="#20d040"/></svg><div class="a" style="left:200px;top:76px;width:1px;height:23px;background:#8f9db8"></div><div class="a" style="left:201px;top:76px;width:1px;height:23px;background:#d3dbe8"></div><svg class="a" style="left:205px;top:71px" width="28" height="32" viewBox="0 0 28 32"><g transform="translate(3 6)"><rect x="1.71" y="0" width="5.32" height="6.84" fill="#1a1a1a"/><rect x="14.63" y="0" width="5.32" height="6.84" fill="#1a1a1a"/><rect x="0" y="5.7" width="8.93" height="14.25" fill="#1a1a1a" rx="0.6"/><rect x="12.92" y="5.7" width="8.93" height="14.25" fill="#1a1a1a" rx="0.6"/><rect x="7.98" y="6.84" width="6.08" height="5.32" fill="#1a1a1a"/><rect x="2.28" y="7.6" width="1.71" height="10.45" fill="#7a7a7a"/><rect x="15.2" y="7.6" width="1.71" height="10.45" fill="#7a7a7a"/></g></svg><svg class="a" style="left:233px;top:71px" width="28" height="32" viewBox="0 0 28 32"><rect x="3" y="6" width="21" height="16" fill="#fff" stroke="#5c74b8" stroke-width="0.7"/><rect x="3" y="6" width="21" height="4.2" fill="url(#wt)"/><rect x="2.7" y="21" width="21.6" height="1.6" fill="#1c2d6b"/><rect x="5" y="11.5" width="17" height="2" fill="#16dada"/><rect x="5" y="15" width="17" height="2" fill="#16dada"/><rect x="14.4" y="15" width="2.8" height="3.6" fill="#0c0c0c"/><rect x="21.2" y="15" width="2.8" height="3.6" fill="#0c0c0c"/><rect x="13.5" y="18" width="4.7" height="7.5" fill="#0c0c0c" rx="0.6"/><rect x="20.3" y="18" width="4.7" height="7.5" fill="#0c0c0c" rx="0.6"/><rect x="17.7" y="18.6" width="3.2" height="2.8" fill="#0c0c0c"/><rect x="14.7" y="19" width="0.9" height="5.5" fill="#8b8b8b"/><rect x="21.5" y="19" width="0.9" height="5.5" fill="#8b8b8b"/></svg><div class="a" style="left:264px;top:76px;width:1px;height:23px;background:#8f9db8"></div><div class="a" style="left:265px;top:76px;width:1px;height:23px;background:#d3dbe8"></div><svg class="a" style="left:269px;top:71px" width="37" height="32" viewBox="0 0 37 32"><rect x="4" y="6" width="22" height="8" fill="#0b5be0"/><text x="5" y="13.1" font-size="9.5" fill="#fff" font-family="Liberation Sans,sans-serif" font-weight="bold" textLength="20" lengthAdjust="spacingAndGlyphs">Dev</text><rect x="4" y="15.5" width="10" height="8" fill="#1a50e0"/><rect x="5.5" y="17.3" width="4" height="4.2" fill="#dfe8ff"/><rect x="13.9" y="14.5" width="2.8" height="3.6" fill="#0c0c0c"/><rect x="20.7" y="14.5" width="2.8" height="3.6" fill="#0c0c0c"/><rect x="13" y="17.5" width="4.7" height="7.5" fill="#0c0c0c" rx="0.6"/><rect x="19.8" y="17.5" width="4.7" height="7.5" fill="#0c0c0c" rx="0.6"/><rect x="17.2" y="18.1" width="3.2" height="2.8" fill="#0c0c0c"/><rect x="14.2" y="18.5" width="0.9" height="5.5" fill="#8b8b8b"/><rect x="21" y="18.5" width="0.9" height="5.5" fill="#8b8b8b"/><path d="M25.5 15.2h5l-2.5 3z" fill="#1b2a4e"/></svg><svg class="a" style="left:306px;top:71px" width="28" height="32" viewBox="0 0 28 32"><rect x="4" y="6.3" width="21" height="10.5" fill="#0b5be0"/><text x="5" y="15.9" font-size="10.5" fill="#fff" font-family="Liberation Sans,sans-serif" font-weight="bold" textLength="19" lengthAdjust="spacingAndGlyphs">Dev</text><rect x="11.5" y="19" width="13.5" height="6.5" fill="#2a3a7a"/><path d="M12.5 21.5h11.5M12.5 23.5h11.5M16 20v5M20 20v5" fill="none" stroke="#fff" stroke-width="0.9"/></svg><svg class="a" style="left:334px;top:71px" width="28" height="32" viewBox="0 0 28 32"><rect x="3.5" y="6.3" width="21" height="6.8" fill="#0b5be0"/><text x="4.5" y="12.2" font-size="8" fill="#fff" font-family="Liberation Sans,sans-serif" font-weight="bold" textLength="19" lengthAdjust="spacingAndGlyphs">Dev</text><path d="M10.5 17h4v6.5h-4" fill="none" stroke="#111" stroke-width="1.3"/><rect x="3.5" y="15" width="7" height="4.2" fill="#f5a800" stroke="#6b4a08" stroke-width="0.8"/><rect x="3.5" y="21.3" width="7" height="4.2" fill="#f5a800" stroke="#6b4a08" stroke-width="0.8"/><rect x="17" y="13.8" width="7.5" height="3.4" fill="#ff70a8" stroke="#7a2040" stroke-width="0.6"/><rect x="13.9" y="15" width="2.8" height="3.6" fill="#0c0c0c"/><rect x="20.7" y="15" width="2.8" height="3.6" fill="#0c0c0c"/><rect x="13" y="18" width="4.7" height="7.5" fill="#0c0c0c" rx="0.6"/><rect x="19.8" y="18" width="4.7" height="7.5" fill="#0c0c0c" rx="0.6"/><rect x="17.2" y="18.6" width="3.2" height="2.8" fill="#0c0c0c"/><rect x="14.2" y="19" width="0.9" height="5.5" fill="#8b8b8b"/><rect x="21" y="19" width="0.9" height="5.5" fill="#8b8b8b"/></svg><svg class="a" style="left:362px;top:71px" width="28" height="32" viewBox="0 0 28 32"><rect x="3.5" y="6.3" width="21" height="6.8" fill="#0b5be0"/><text x="4.5" y="12.2" font-size="8" fill="#fff" font-family="Liberation Sans,sans-serif" font-weight="bold" textLength="19" lengthAdjust="spacingAndGlyphs">Dev</text><path d="M3.5 16.3h21M8.5 16.3v3M19.5 16.3v3M14 13.2v3" fill="none" stroke="#222" stroke-width="1.3"/><rect x="4" y="19" width="9" height="6.5" fill="#555" stroke="#222" stroke-width="0.8"/><rect x="15" y="19" width="9" height="6.5" fill="#555" stroke="#222" stroke-width="0.8"/></svg><div class="a" style="left:393px;top:76px;width:1px;height:23px;background:#8f9db8"></div><div class="a" style="left:394px;top:76px;width:1px;height:23px;background:#d3dbe8"></div><div class="a" style="left:398px;top:73px;width:27.5px;height:27.5px;background:#fff0c4;border:1px solid #e5c365;box-sizing:border-box;border-radius:1px"></div><svg class="a" style="left:398px;top:71px" width="28" height="32" viewBox="0 0 28 32"><rect x="10" y="5.7" width="4" height="2.4" fill="#1a60f0"/><path d="M17.11 10.89L18.91 9.09" stroke="#1a60f0" stroke-width="1.6" fill="none"/><circle cx="12" cy="16" r="7.3" fill="#fff" stroke="#1a60f0" stroke-width="2.3"/><path d="M12 16l4.02 -3.65" fill="none" stroke="#e01010" stroke-width="1.5"/><circle cx="12" cy="16" r="1" fill="#333"/><rect x="15.4" y="15.2" width="2.8" height="3.6" fill="#0c0c0c"/><rect x="22.2" y="15.2" width="2.8" height="3.6" fill="#0c0c0c"/><rect x="14.5" y="18.2" width="4.7" height="7.5" fill="#0c0c0c" rx="0.6"/><rect x="21.3" y="18.2" width="4.7" height="7.5" fill="#0c0c0c" rx="0.6"/><rect x="18.7" y="18.8" width="3.2" height="2.8" fill="#0c0c0c"/><rect x="15.7" y="19.2" width="0.9" height="5.5" fill="#8b8b8b"/><rect x="22.5" y="19.2" width="0.9" height="5.5" fill="#8b8b8b"/></svg><svg class="a" style="left:426px;top:71px" width="28" height="32" viewBox="0 0 28 32"><rect x="3" y="6" width="20" height="15" fill="#fff" stroke="#5c74b8" stroke-width="0.7"/><rect x="3" y="6" width="20" height="4.2" fill="url(#wt)"/><rect x="2.7" y="20" width="20.6" height="1.6" fill="#1c2d6b"/><rect x="5" y="11.5" width="5" height="1.8" fill="#16dada"/><rect x="5" y="14.5" width="5" height="1.8" fill="#16dada"/><rect x="14.5" y="8" width="4" height="2.4" fill="#1a60f0"/><path d="M20.7 12.8L22.5 11" stroke="#1a60f0" stroke-width="1.6" fill="none"/><circle cx="16.5" cy="17" r="6" fill="#fff" stroke="#1a60f0" stroke-width="2.3"/><path d="M16.5 17l3.3 -3" fill="none" stroke="#e01010" stroke-width="1.5"/><circle cx="16.5" cy="17" r="1" fill="#333"/><rect x="15.81" y="16" width="2.52" height="3.24" fill="#0c0c0c"/><rect x="21.93" y="16" width="2.52" height="3.24" fill="#0c0c0c"/><rect x="15" y="18.7" width="4.23" height="6.75" fill="#0c0c0c" rx="0.6"/><rect x="21.12" y="18.7" width="4.23" height="6.75" fill="#0c0c0c" rx="0.6"/><rect x="18.78" y="19.24" width="2.88" height="2.52" fill="#0c0c0c"/><rect x="16.08" y="19.6" width="0.81" height="4.95" fill="#8b8b8b"/><rect x="22.2" y="19.6" width="0.81" height="4.95" fill="#8b8b8b"/></svg><div class="a" style="left:457px;top:76px;width:1px;height:23px;background:#8f9db8"></div><div class="a" style="left:458px;top:76px;width:1px;height:23px;background:#d3dbe8"></div><svg class="a" style="left:462px;top:71px" width="28" height="32" viewBox="0 0 28 32"><rect x="4" y="6.7" width="20" height="19.8" fill="none" stroke="#2a2a3a" stroke-width="1"/><rect x="5.2" y="7.9" width="17.6" height="17.4" fill="#fff" stroke="#2a62f0" stroke-width="2"/><path d="M13 11.5h8M13 16.5h8M13 21.5h8" fill="none" stroke="#111" stroke-width="1.8"/><rect x="7.5" y="10.3" width="3.4" height="2.6" fill="#999"/><rect x="7.5" y="15.3" width="3.4" height="2.6" fill="#999"/><rect x="7.5" y="20.3" width="3.4" height="2.6" fill="#999"/></svg><div class="a" style="left:493px;top:76px;width:1px;height:23px;background:#8f9db8"></div><div class="a" style="left:494px;top:76px;width:1px;height:23px;background:#d3dbe8"></div><svg class="a" style="left:498px;top:71px" width="28" height="32" viewBox="0 0 28 32"><path d="M4 25V15l7-6 6 4.5 7-4v6l-7 4V25z" fill="#cdd4e1" stroke="#aab3c5" stroke-width="1"/><path d="M6 17h8M6 20h8M6 23h8M10 14v11" fill="#cdd4e1" stroke="#8d96a9" stroke-width="0.9"/><rect x="14" y="8" width="10" height="6" fill="#aab3c5"/></svg><svg class="a" style="left:526px;top:71px" width="28" height="32" viewBox="0 0 28 32"><rect x="3.5" y="17" width="15" height="8.5" fill="#fff" stroke="#2030d0" stroke-width="1.1"/><path d="M3.5 20h15M3.5 22.8h15M8.5 17v8.5M13.5 17v8.5" fill="none" stroke="#2030d0" stroke-width="0.9"/><rect x="9" y="20.4" width="4" height="2" fill="#e02020"/><ellipse cx="11" cy="11" rx="7" ry="3.2" fill="#e8ecf8" stroke="#333" stroke-width="1"/><ellipse cx="11" cy="9.2" rx="5.5" ry="2.2" fill="#fff" stroke="#4060d0" stroke-width="0.9"/><g transform="translate(12.5 16) rotate(-40) scale(0.95)"><path d="M0 0L3.2 -2.3V2.3z" fill="#e8c878" stroke="#6b5a2a" stroke-width="0.5"/><path d="M0 0L1.4 -1V1z" fill="#222"/><rect x="3.2" y="-2.3" width="8.2" height="4.6" fill="#3fb83f" stroke="#1d7a1d" stroke-width="0.6" rx="0.8"/><rect x="3.4" y="-1.9" width="7.8" height="1.3" fill="#8fe08f"/></g></svg><div class="a" style="left:557px;top:76px;width:1px;height:23px;background:#8f9db8"></div><div class="a" style="left:558px;top:76px;width:1px;height:23px;background:#d3dbe8"></div><div class="a" style="left:562px;top:73px;width:27.5px;height:27.5px;background:#fff0c4;border:1px solid #e5c365;box-sizing:border-box;border-radius:1px"></div><svg class="a" style="left:562px;top:71px" width="28" height="32" viewBox="0 0 28 32"><rect x="3" y="6.7" width="19.5" height="12.5" fill="#fff" stroke="#2b2b3b" stroke-width="1.5"/><path d="M6 9.5h3.6M7.8 9.5v6.5M6 16h3.6" fill="none" stroke="#222" stroke-width="1.1"/><path d="M5.5 17.3L12 17.3" stroke="#222" stroke-width="0.9" fill="none"/><g transform="translate(11.5 25) rotate(-40) scale(1.25)"><path d="M0 0L3.2 -2.3V2.3z" fill="#e8c878" stroke="#6b5a2a" stroke-width="0.5"/><path d="M0 0L1.4 -1V1z" fill="#222"/><rect x="3.2" y="-2.3" width="8.2" height="4.6" fill="#3fb83f" stroke="#1d7a1d" stroke-width="0.6" rx="0.8"/><rect x="3.4" y="-1.9" width="7.8" height="1.3" fill="#8fe08f"/></g></svg><svg class="a" style="left:590px;top:71px" width="28" height="32" viewBox="0 0 28 32"><text x="6.5" y="14" font-size="10.5" fill="#1a30d8" font-family="Liberation Sans,sans-serif" font-weight="bold" textLength="17.5" lengthAdjust="spacingAndGlyphs">I/o</text><path d="M10.5 14.5L4.5 20.5h3.8L5 25.5l7-6.5H8.3l3.7-4.5z" fill="#ff8a1a" stroke="#c84a00" stroke-width="0.5"/><path d="M11.5 19.5l4.3 4.3 9.2-7.5" fill="none" stroke="#e01010" stroke-width="2.6"/></svg><div class="a" style="left:621px;top:76px;width:1px;height:23px;background:#8f9db8"></div><div class="a" style="left:622px;top:76px;width:1px;height:23px;background:#d3dbe8"></div><svg class="a" style="left:626px;top:71px" width="28" height="32" viewBox="0 0 28 32"><path d="M6 7h3v5l3-2.5V7h3v6l-3 3v3l8-1 3 3-4 4H8l-3-4 3-4v-3z" fill="#cdd4e1" stroke="#aab3c5" stroke-width="0.8"/><path d="M8.5 21.5l2.5 2.5 4.5-5" fill="none" stroke="#8d96a9" stroke-width="1.6"/></svg><div class="a" style="left:657px;top:76px;width:1px;height:23px;background:#8f9db8"></div><div class="a" style="left:658px;top:76px;width:1px;height:23px;background:#d3dbe8"></div><svg class="a" style="left:662px;top:71px" width="37" height="32" viewBox="0 0 37 32"><rect x="3.8" y="6.3" width="22.2" height="7.8" fill="#0b5be0"/><text x="5" y="13.2" font-size="8" fill="#20e8ff" font-family="Liberation Sans,sans-serif" font-weight="bold" textLength="19" lengthAdjust="spacingAndGlyphs">Dev</text><ellipse cx="18.3" cy="21.3" rx="7.6" ry="4.2" fill="#fff" stroke="#2a1a10" stroke-width="1.3"/><circle cx="18.3" cy="21.3" r="3.2" fill="#8a2a10" stroke="#3a1008" stroke-width="0.7"/><circle cx="18.3" cy="21.3" r="1.2" fill="#fff"/><path d="M26 15.2h5l-2.5 3z" fill="#2244a0"/></svg><div class="a" style="left:702px;top:76px;width:1px;height:23px;background:#8f9db8"></div><div class="a" style="left:703px;top:76px;width:1px;height:23px;background:#d3dbe8"></div><svg class="a" style="left:707px;top:71px" width="37" height="32" viewBox="0 0 37 32"><path d="M9.5 5v6M5 9.5h9" fill="none" stroke="#555" stroke-width="1.2"/><ellipse cx="9.5" cy="8.5" rx="4.8" ry="2" fill="none" stroke="#7a30a0" stroke-width="1.1"/><rect x="6" y="13.5" width="7" height="12" fill="#666" stroke="#222" stroke-width="1"/><rect x="7" y="11" width="5" height="2.8" fill="#999" stroke="#333" stroke-width="0.7"/><path d="M22.67 20.17L26.07 23.57" stroke="#2a1a10" stroke-width="3" fill="none"/><path d="M23.47 20.97L25.87 23.37" stroke="#c4733a" stroke-width="1.7" fill="none"/><circle cx="19.5" cy="17" r="4.4" fill="#fff" stroke="#111" stroke-width="1.6"/><path d="M17.08 17a2.42 2.42 0 0 1 2.42 -2.42" fill="none" stroke="#c9d2e0" stroke-width="0.9"/><path d="M26.3 15.2h5l-2.5 3z" fill="#2244a0"/></svg><div class="a" style="left:747px;top:76px;width:1px;height:23px;background:#8f9db8"></div><div class="a" style="left:748px;top:76px;width:1px;height:23px;background:#d3dbe8"></div><svg class="a" style="left:752px;top:71px" width="28" height="32" viewBox="0 0 28 32"><rect x="3" y="6.7" width="18.7" height="14" fill="#fff" stroke="#1a2ab0" stroke-width="1.4"/><rect x="3.6" y="7.3" width="17.5" height="3.2" fill="#1a2ab0"/><rect x="5" y="12.3" width="14" height="2" fill="#7ad890"/><path d="M5 16.2h14M5 18.6h9" fill="none" stroke="#999" stroke-width="1.2"/><path d="M20.15 21.75L23.55 25.15" stroke="#2a1a10" stroke-width="3" fill="none"/><path d="M20.95 22.55L23.35 24.95" stroke="#c4733a" stroke-width="1.7" fill="none"/><circle cx="17.2" cy="18.8" r="4.1" fill="#fff" stroke="#111" stroke-width="1.6"/><path d="M14.95 18.8a2.25 2.25 0 0 1 2.25 -2.25" fill="none" stroke="#c9d2e0" stroke-width="0.9"/></svg><svg class="a" style="left:780px;top:71px" width="28" height="32" viewBox="0 0 28 32"><rect x="4" y="7" width="20" height="18" fill="#e4e8f0"/><path d="M6 21h16M6 18v6M22 18v6M14 10v6M11 10h6" fill="none" stroke="#aab3c5" stroke-width="1.6"/></svg><svg class="a" style="left:808px;top:71px" width="28" height="32" viewBox="0 0 28 32"><rect x="4" y="7" width="20" height="18" fill="#e4e8f0"/><path d="M6 12h16M6 9v6M22 9v6" fill="none" stroke="#aab3c5" stroke-width="1.4"/><rect x="11.9" y="14" width="2.8" height="3.6" fill="#aab3c5"/><rect x="18.7" y="14" width="2.8" height="3.6" fill="#aab3c5"/><rect x="11" y="17" width="4.7" height="7.5" fill="#aab3c5" rx="0.6"/><rect x="17.8" y="17" width="4.7" height="7.5" fill="#aab3c5" rx="0.6"/><rect x="15.2" y="17.6" width="3.2" height="2.8" fill="#aab3c5"/><rect x="12.2" y="18" width="0.9" height="5.5" fill="#cdd4e1"/><rect x="19" y="18" width="0.9" height="5.5" fill="#cdd4e1"/></svg><svg class="a" style="left:836px;top:71px" width="28" height="32" viewBox="0 0 28 32"><rect x="4" y="7" width="20" height="18" fill="#e4e8f0"/><path d="M6 12h8M6 9v6M14 9v6" fill="none" stroke="#aab3c5" stroke-width="1.4"/><rect x="14" y="12" width="9" height="12" fill="#cdd4e1" stroke="#aab3c5" stroke-width="1"/><path d="M16 15h5M16 18h5M16 21h5" fill="none" stroke="#8d96a9" stroke-width="0.9"/></svg><svg class="a" style="left:894px;top:71px" width="28" height="32" viewBox="0 0 28 32"><rect x="4.3" y="7" width="21.7" height="18.5" fill="#c3c9d5" stroke="#7b8494" stroke-width="1.4"/><rect x="5" y="7.7" width="20.3" height="4" fill="#7b8494"/><rect x="6" y="13" width="18" height="10.5" fill="#dde1e9"/><path d="M7.5 16h6M16 15v2.6M18.5 15v2.6M21.5 15v2.6M7.5 19.5h6M16 19.5h1.5M19 19.5h1.5" fill="none" stroke="#7b8494" stroke-width="1.5"/></svg><svg class="a" style="left:922px;top:71px" width="28" height="32" viewBox="0 0 28 32"><rect x="8" y="6" width="17" height="20" fill="#9aa2b1" stroke="#7b8494" stroke-width="1.6" rx="1"/><rect x="11.5" y="10.5" width="9" height="11" fill="#dde1e9" stroke="#7b8494" stroke-width="1.6"/><rect x="15" y="13" width="2.4" height="6" fill="#7b8494"/><path d="M4 11.5h4M4 21h4" fill="none" stroke="#7b8494" stroke-width="2"/><rect x="8" y="24.5" width="17" height="2" fill="#7b8494"/></svg><svg class="a" style="left:950px;top:71px" width="28" height="32" viewBox="0 0 28 32"><rect x="3.5" y="7.5" width="21.5" height="18" fill="#dde1e9" stroke="#7b8494" stroke-width="1.3"/><rect x="4" y="8" width="20.5" height="3.5" fill="#9aa2b1"/><path d="M3.5 12h21.5M3.5 16.5h21.5M3.5 21h21.5M7 8v17" fill="none" stroke="#9aa2b1" stroke-width="1.3"/></svg><svg class="a" style="left:978px;top:71px" width="28" height="32" viewBox="0 0 28 32"><path d="M9 6.5l1.4 2.6 2.9.4-2.1 2 .5 2.9L9 13l-2.7 1.4.5-2.9-2.1-2 2.9-.4z" fill="#7b8494"/><rect x="13.5" y="7" width="5" height="3" fill="#c3c9d5"/><rect x="19.5" y="7" width="5" height="3" fill="#c3c9d5"/><rect x="13.5" y="11.5" width="11" height="3.6" fill="#9aa2b1"/><rect x="4.5" y="15" width="8.5" height="4.5" fill="#9aa2b1"/><rect x="4.5" y="19.5" width="4.5" height="7" fill="#7b8494"/><rect x="10.5" y="17.5" width="4" height="9" fill="#7b8494"/><rect x="5" y="21" width="3" height="3" fill="#dde1e9"/><rect x="15.5" y="15.5" width="8" height="3" fill="#c3c9d5"/></svg><div class="a" style="left:0;top:104px;width:1433.5px;height:34px;box-sizing:border-box;background:linear-gradient(#f4f7fd,#eaeff9);border:1px solid #b3912f;border-radius:0 3px 0 0"></div><div class="a" style="left:1419.5px;top:105px;width:13px;height:32px;background:#dfe5f0"></div><svg class="a" style="left:1422.5px;top:127.5px" width="8" height="7" viewBox="0 0 8 7"><rect x="0.6" y="0" width="6" height="1.3" fill="#27385c"/><path d="M0 2.6h7.2L3.6 6.4z" fill="#27385c"/></svg><div class="a" style="left:8.9px;top:110px;width:3px;height:3px;background:#587399;box-shadow:inset 1px 1px #6f8bb0"></div><div class="a" style="left:8.9px;top:116px;width:3px;height:3px;background:#587399;box-shadow:inset 1px 1px #6f8bb0"></div><div class="a" style="left:8.9px;top:122px;width:3px;height:3px;background:#587399;box-shadow:inset 1px 1px #6f8bb0"></div><div class="a" style="left:8.9px;top:128px;width:3px;height:3px;background:#587399;box-shadow:inset 1px 1px #6f8bb0"></div><svg class="a" style="left:13px;top:104px" width="28" height="34" viewBox="0 0 28 34"><g transform="translate(0 1)"><path d="M3 10.5h5.5M8.8 6v9M17.8 6v9M18 10.5h7" fill="none" stroke="#0a0a0a" stroke-width="1.5"/></g><text x="7.7" y="27.2" font-size="11" fill="#000" font-family="Liberation Sans,sans-serif" textLength="12.6" lengthAdjust="spacingAndGlyphs" stroke="#000" stroke-width=".2">F5</text></svg><svg class="a" style="left:41px;top:104px" width="28" height="34" viewBox="0 0 28 34"><g transform="translate(0 1)"><path d="M4.5 6v4.5h4M8.8 6v9M19 6v9M19.2 10.5h4.3V6" fill="none" stroke="#0a0a0a" stroke-width="1.5"/></g><text x="3.85" y="27.2" font-size="11" fill="#000" font-family="Liberation Sans,sans-serif" textLength="20.3" lengthAdjust="spacingAndGlyphs" stroke="#000" stroke-width=".2">sF5</text></svg><svg class="a" style="left:69px;top:104px" width="28" height="34" viewBox="0 0 28 34"><g transform="translate(0 1)"><path d="M3 10.5h5.5M8.8 6v9M17.8 6v9M18 10.5h7" fill="none" stroke="#0a0a0a" stroke-width="1.5"/><path d="M9.5 15L17.5 6" stroke="#0a0a0a" stroke-width="1.4" fill="none"/></g><text x="7.7" y="27.2" font-size="11" fill="#000" font-family="Liberation Sans,sans-serif" textLength="12.6" lengthAdjust="spacingAndGlyphs" stroke="#000" stroke-width=".2">F6</text></svg><svg class="a" style="left:97px;top:104px" width="28" height="34" viewBox="0 0 28 34"><g transform="translate(0 1)"><path d="M4.5 6v4.5h4M8.8 6v9M19 6v9M19.2 10.5h4.3V6" fill="none" stroke="#0a0a0a" stroke-width="1.5"/><path d="M9.5 15L17.5 6" stroke="#0a0a0a" stroke-width="1.4" fill="none"/></g><text x="3.85" y="27.2" font-size="11" fill="#000" font-family="Liberation Sans,sans-serif" textLength="20.3" lengthAdjust="spacingAndGlyphs" stroke="#000" stroke-width=".2">sF6</text></svg><svg class="a" style="left:125px;top:104px" width="28" height="34" viewBox="0 0 28 34"><g transform="translate(0 1)"><path d="M3 11h4.5M11.5 6.3L7.5 11l4 4.7M16.5 6.3l4 4.7-4 4.7M20.5 11H25" fill="none" stroke="#0a0a0a" stroke-width="1.5"/></g><text x="7.7" y="27.2" font-size="11" fill="#000" font-family="Liberation Sans,sans-serif" textLength="12.6" lengthAdjust="spacingAndGlyphs" stroke="#000" stroke-width=".2">F7</text></svg><svg class="a" style="left:153px;top:104px" width="28" height="34" viewBox="0 0 28 34"><g transform="translate(0 1)"><path d="M3 11h4.5M11.5 6.3h-4v9.4h4M16.5 6.3h4v9.4h-4M20.5 11H25" fill="none" stroke="#0a0a0a" stroke-width="1.5"/></g><text x="7.7" y="27.2" font-size="11" fill="#000" font-family="Liberation Sans,sans-serif" textLength="12.6" lengthAdjust="spacingAndGlyphs" stroke="#000" stroke-width=".2">F8</text></svg><div class="a" style="left:183.5px;top:109px;width:1px;height:23px;background:#8f9db8"></div><div class="a" style="left:184.5px;top:109px;width:1px;height:23px;background:#d3dbe8"></div><svg class="a" style="left:189px;top:104px" width="28" height="34" viewBox="0 0 28 34"><g transform="translate(0 1)"><path d="M3 11L25 11" stroke="#0a0a0a" stroke-width="1.3" fill="none"/></g><text x="7.7" y="27.2" font-size="11" fill="#000" font-family="Liberation Sans,sans-serif" textLength="12.6" lengthAdjust="spacingAndGlyphs" stroke="#000" stroke-width=".2">F9</text></svg><svg class="a" style="left:217px;top:104px" width="28" height="34" viewBox="0 0 28 34"><g transform="translate(0 1)"><path d="M14 6L14 15.5" stroke="#0a0a0a" stroke-width="1.3" fill="none"/></g><text x="3.85" y="27.2" font-size="11" fill="#000" font-family="Liberation Sans,sans-serif" textLength="20.3" lengthAdjust="spacingAndGlyphs" stroke="#000" stroke-width=".2">sF9</text></svg><svg class="a" style="left:245px;top:104px" width="28" height="34" viewBox="0 0 28 34"><g transform="translate(0 1)"><path d="M3 11L25 11" stroke="#0a0a0a" stroke-width="1.8" fill="none"/><path d="M9.2 5.8l9.6 10.4M18.8 5.8l-9.6 10.4" fill="none" stroke="#f01010" stroke-width="1.8"/></g><text x="3.85" y="27.2" font-size="11" fill="#000" font-family="Liberation Sans,sans-serif" textLength="20.3" lengthAdjust="spacingAndGlyphs" stroke="#000" stroke-width=".2">cF9</text></svg><svg class="a" style="left:273px;top:104px" width="28" height="34" viewBox="0 0 28 34"><g transform="translate(0 1)"><path d="M14 6L14 16" stroke="#0a0a0a" stroke-width="1.5" fill="none"/><path d="M9.2 5.8l9.6 10.4M18.8 5.8l-9.6 10.4" fill="none" stroke="#f01010" stroke-width="1.8"/></g><text x="2.25" y="27.2" font-size="11" fill="#000" font-family="Liberation Sans,sans-serif" textLength="23.5" lengthAdjust="spacingAndGlyphs" stroke="#000" stroke-width=".2">cF10</text></svg><div class="a" style="left:303.5px;top:109px;width:1px;height:23px;background:#8f9db8"></div><div class="a" style="left:304.5px;top:109px;width:1px;height:23px;background:#d3dbe8"></div><svg class="a" style="left:309px;top:104px" width="28" height="34" viewBox="0 0 28 34"><g transform="translate(0 1)"><path d="M3 10.5h5.5M8.8 6v9M17.8 6v9M18 10.5h7" fill="none" stroke="#0a0a0a" stroke-width="1.5"/><path d="M13.4 15V6.6M10.4 9.3l3-3 3 3" fill="none" stroke="#0a0a0a" stroke-width="1.3"/></g><text x="3.85" y="27.2" font-size="11" fill="#000" font-family="Liberation Sans,sans-serif" textLength="20.3" lengthAdjust="spacingAndGlyphs" stroke="#000" stroke-width=".2">sF7</text></svg><svg class="a" style="left:337px;top:104px" width="28" height="34" viewBox="0 0 28 34"><g transform="translate(0 1)"><path d="M3 10.5h5.5M8.8 6v9M17.8 6v9M18 10.5h7" fill="none" stroke="#0a0a0a" stroke-width="1.5"/><path d="M13.4 6v8.6M10.4 11.8l3 3 3-3" fill="none" stroke="#0a0a0a" stroke-width="1.3"/></g><text x="3.85" y="27.2" font-size="11" fill="#000" font-family="Liberation Sans,sans-serif" textLength="20.3" lengthAdjust="spacingAndGlyphs" stroke="#000" stroke-width=".2">sF8</text></svg><svg class="a" style="left:365px;top:104px" width="28" height="34" viewBox="0 0 28 34"><g transform="translate(0 1)"><path d="M4.5 6v4.5h4M8.8 6v9M19 6v9M19.2 10.5h4.3V6" fill="none" stroke="#0a0a0a" stroke-width="1.5"/><path d="M13.9 15V6.6M10.9 9.3l3-3 3 3" fill="none" stroke="#0a0a0a" stroke-width="1.3"/></g><text x="3.85" y="27.2" font-size="11" fill="#000" font-family="Liberation Sans,sans-serif" textLength="20.3" lengthAdjust="spacingAndGlyphs" stroke="#000" stroke-width=".2">aF7</text></svg><svg class="a" style="left:393px;top:104px" width="28" height="34" viewBox="0 0 28 34"><g transform="translate(0 1)"><path d="M4.5 6v4.5h4M8.8 6v9M19 6v9M19.2 10.5h4.3V6" fill="none" stroke="#0a0a0a" stroke-width="1.5"/><path d="M13.9 6v8.6M10.9 11.8l3 3 3-3" fill="none" stroke="#0a0a0a" stroke-width="1.3"/></g><text x="3.85" y="27.2" font-size="11" fill="#000" font-family="Liberation Sans,sans-serif" textLength="20.3" lengthAdjust="spacingAndGlyphs" stroke="#000" stroke-width=".2">aF8</text></svg><div class="a" style="left:423.5px;top:109px;width:1px;height:23px;background:#8f9db8"></div><div class="a" style="left:424.5px;top:109px;width:1px;height:23px;background:#d3dbe8"></div><svg class="a" style="left:429px;top:104px" width="28" height="34" viewBox="0 0 28 34"><g transform="translate(0 1)"><path d="M3 10.5h5.5M8.8 6v9M17.8 6v9M18 10.5h7" fill="none" stroke="#0a0a0a" stroke-width="1.5"/><path d="M13.4 15V6.6M10.4 9.3l3-3 3 3" fill="none" stroke="#0a0a0a" stroke-width="1.3"/><path d="M8 15L19 6" stroke="#0a0a0a" stroke-width="1.4" fill="none"/></g><text x="2.25" y="27.2" font-size="11" fill="#000" font-family="Liberation Sans,sans-serif" textLength="23.5" lengthAdjust="spacingAndGlyphs" stroke="#000" stroke-width=".2">saF5</text></svg><svg class="a" style="left:457px;top:104px" width="28" height="34" viewBox="0 0 28 34"><g transform="translate(0 1)"><path d="M3 10.5h5.5M8.8 6v9M17.8 6v9M18 10.5h7" fill="none" stroke="#0a0a0a" stroke-width="1.5"/><path d="M13.4 6v8.6M10.4 11.8l3 3 3-3" fill="none" stroke="#0a0a0a" stroke-width="1.3"/><path d="M8 15L19 6" stroke="#0a0a0a" stroke-width="1.4" fill="none"/></g><text x="2.25" y="27.2" font-size="11" fill="#000" font-family="Liberation Sans,sans-serif" textLength="23.5" lengthAdjust="spacingAndGlyphs" stroke="#000" stroke-width=".2">saF6</text></svg><svg class="a" style="left:485px;top:104px" width="28" height="34" viewBox="0 0 28 34"><g transform="translate(0 1)"><path d="M4.5 6v4.5h4M8.8 6v9M19 6v9M19.2 10.5h4.3V6" fill="none" stroke="#0a0a0a" stroke-width="1.5"/><path d="M13.9 15V6.6M10.9 9.3l3-3 3 3" fill="none" stroke="#0a0a0a" stroke-width="1.3"/><path d="M8 15L20 6" stroke="#0a0a0a" stroke-width="1.4" fill="none"/></g><text x="2.25" y="27.2" font-size="11" fill="#000" font-family="Liberation Sans,sans-serif" textLength="23.5" lengthAdjust="spacingAndGlyphs" stroke="#000" stroke-width=".2">saF7</text></svg><svg class="a" style="left:513px;top:104px" width="28" height="34" viewBox="0 0 28 34"><g transform="translate(0 1)"><path d="M4.5 6v4.5h4M8.8 6v9M19 6v9M19.2 10.5h4.3V6" fill="none" stroke="#0a0a0a" stroke-width="1.5"/><path d="M13.9 6v8.6M10.9 11.8l3 3 3-3" fill="none" stroke="#0a0a0a" stroke-width="1.3"/><path d="M8 15L20 6" stroke="#0a0a0a" stroke-width="1.4" fill="none"/></g><text x="2.25" y="27.2" font-size="11" fill="#000" font-family="Liberation Sans,sans-serif" textLength="23.5" lengthAdjust="spacingAndGlyphs" stroke="#000" stroke-width=".2">saF8</text></svg><div class="a" style="left:543.5px;top:109px;width:1px;height:23px;background:#8f9db8"></div><div class="a" style="left:544.5px;top:109px;width:1px;height:23px;background:#d3dbe8"></div><svg class="a" style="left:549px;top:104px" width="28" height="34" viewBox="0 0 28 34"><g transform="translate(0 1)"><path d="M14 15V6.6M11 9.3l3-3 3 3" fill="none" stroke="#0a0a0a" stroke-width="1.3"/></g><text x="3.85" y="27.2" font-size="11" fill="#000" font-family="Liberation Sans,sans-serif" textLength="20.3" lengthAdjust="spacingAndGlyphs" stroke="#000" stroke-width=".2">aF5</text></svg><svg class="a" style="left:577px;top:104px" width="28" height="34" viewBox="0 0 28 34"><g transform="translate(0 1)"><path d="M14 6v8.6M11 11.8l3 3 3-3" fill="none" stroke="#0a0a0a" stroke-width="1.3"/></g><text x="2.25" y="27.2" font-size="11" fill="#000" font-family="Liberation Sans,sans-serif" textLength="23.5" lengthAdjust="spacingAndGlyphs" stroke="#000" stroke-width=".2">caF5</text></svg><svg class="a" style="left:605px;top:104px" width="28" height="34" viewBox="0 0 28 34"><g transform="translate(0 1)"><path d="M3 11h22M10 14.5l9-7" fill="none" stroke="#0a0a0a" stroke-width="1.2"/></g><text x="1.25" y="27.2" font-size="11" fill="#000" font-family="Liberation Sans,sans-serif" textLength="25.5" lengthAdjust="spacingAndGlyphs" stroke="#000" stroke-width=".2">caF10</text></svg><div class="a" style="left:635.5px;top:109px;width:1px;height:23px;background:#8f9db8"></div><div class="a" style="left:636.5px;top:109px;width:1px;height:23px;background:#d3dbe8"></div><svg class="a" style="left:641px;top:104px" width="28" height="34" viewBox="0 0 28 34"><path d="M2.3 17h3M22.7 17h3M3.5 13v8M24.5 13v8" fill="none" stroke="#0a0a0a" stroke-width="1.5"/><rect x="5.5" y="8" width="17" height="18.5" fill="#d4d4d4" stroke="#0a0a0a" stroke-width="1.7"/><text x="14" y="21.3" font-size="11.5" fill="#1a20f0" font-family="Liberation Sans,sans-serif" font-weight="bold" text-anchor="middle" textLength="12.5" lengthAdjust="spacingAndGlyphs">ST</text></svg><div class="a" style="left:671.5px;top:109px;width:1px;height:23px;background:#8f9db8"></div><div class="a" style="left:672.5px;top:109px;width:1px;height:23px;background:#d3dbe8"></div><svg class="a" style="left:676px;top:105.8px" width="28" height="34" viewBox="0 0 28 34"><path d="M4.5 8.5h6M10.8 5v7M16.8 5v7M17 8.5h6.5" fill="none" stroke="#0a0a0a" stroke-width="1.4"/><path d="M6.5 15h10a2.5 2.5 0 0 1 2.5 2.5v4.5a2.5 2.5 0 0 1 -2.5 2.5h-5.5l-2 3v-3h-2a2.5 2.5 0 0 1 -2.5 -2.5v-4.5a2.5 2.5 0 0 1 2.5 -2.5z" fill="#fff" stroke="#333" stroke-width="1.1"/><path d="M7 18.5h9M7 21h9" fill="none" stroke="#888" stroke-width="0.9"/><g transform="translate(14.5 25.5) rotate(-40) scale(1.05)"><path d="M0 0L3.2 -2.3V2.3z" fill="#e8c878" stroke="#6b5a2a" stroke-width="0.5"/><path d="M0 0L1.4 -1V1z" fill="#222"/><rect x="3.2" y="-2.3" width="8.2" height="4.6" fill="#3fb83f" stroke="#1d7a1d" stroke-width="0.6" rx="0.8"/><rect x="3.4" y="-1.9" width="7.8" height="1.3" fill="#8fe08f"/></g></svg><svg class="a" style="left:704px;top:105.8px" width="28" height="34" viewBox="0 0 28 34"><rect x="3.5" y="7" width="7" height="2.6" fill="#222"/><path d="M11 4.5h10a2.5 2.5 0 0 1 2.5 2.5v3.5a2.5 2.5 0 0 1 -2.5 2.5h-5.5l-2 3v-3h-2a2.5 2.5 0 0 1 -2.5 -2.5v-3.5a2.5 2.5 0 0 1 2.5 -2.5z" fill="#fff" stroke="#333" stroke-width="1.1"/><path d="M11 7.5h9.5M11 10h9.5" fill="none" stroke="#888" stroke-width="0.9"/><g transform="translate(16 14.5) rotate(-40) scale(1)"><path d="M0 0L3.2 -2.3V2.3z" fill="#e8c878" stroke="#6b5a2a" stroke-width="0.5"/><path d="M0 0L1.4 -1V1z" fill="#222"/><rect x="3.2" y="-2.3" width="8.2" height="4.6" fill="#3fb83f" stroke="#1d7a1d" stroke-width="0.6" rx="0.8"/><rect x="3.4" y="-1.9" width="7.8" height="1.3" fill="#8fe08f"/></g><path d="M3.5 22h4.5M8.3 18v8M11.6 18v8M11.8 22h3.4M19 18.3q-3 3.7 0 7.4M22 18.3q3 3.7 0 7.4" fill="none" stroke="#0a0a0a" stroke-width="1.4"/></svg><svg class="a" style="left:733px;top:105.8px" width="28" height="34" viewBox="0 0 28 34"><path d="M6.5 4.5h11a2.5 2.5 0 0 1 2.5 2.5v3.5a2.5 2.5 0 0 1 -2.5 2.5h-6.5l-2 3v-3h-2a2.5 2.5 0 0 1 -2.5 -2.5v-3.5a2.5 2.5 0 0 1 2.5 -2.5z" fill="#fff" stroke="#333" stroke-width="1.1"/><path d="M6.5 7.5h10M6.5 10h10" fill="none" stroke="#888" stroke-width="0.9"/><g transform="translate(16.5 14.5) rotate(-40) scale(1)"><path d="M0 0L3.2 -2.3V2.3z" fill="#e8c878" stroke="#6b5a2a" stroke-width="0.5"/><path d="M0 0L1.4 -1V1z" fill="#222"/><rect x="3.2" y="-2.3" width="8.2" height="4.6" fill="#3fb83f" stroke="#1d7a1d" stroke-width="0.6" rx="0.8"/><rect x="3.4" y="-1.9" width="7.8" height="1.3" fill="#8fe08f"/></g><path d="M3.5 22h5M12 18.3q-3.5 3.7 0 7.4M17.5 18.3q3.5 3.7 0 7.4M20.5 22h4.5" fill="none" stroke="#0a0a0a" stroke-width="1.5"/></svg><div class="a" style="left:763.5px;top:109px;width:1px;height:23px;background:#8f9db8"></div><div class="a" style="left:764.5px;top:109px;width:1px;height:23px;background:#d3dbe8"></div><svg class="a" style="left:768px;top:105.8px" width="28" height="34" viewBox="0 0 28 34"><rect x="3.5" y="7.5" width="7" height="2.5" fill="#7a8190"/><path d="M11.5 4.5h9.5a2.5 2.5 0 0 1 2.5 2.5v3.5a2.5 2.5 0 0 1 -2.5 2.5h-5l-2 3v-3h-2a2.5 2.5 0 0 1 -2.5 -2.5v-3.5a2.5 2.5 0 0 1 2.5 -2.5z" fill="#e4e8f0" stroke="#8d96a9" stroke-width="1.1"/><path d="M14 13l5 6" fill="#7a8190" stroke="#7a8190" stroke-width="2.5"/><path d="M3.5 22.5h4M7.8 19v7M10.8 19v7" fill="none" stroke="#7a8190" stroke-width="1.3"/><rect x="13" y="19" width="11" height="7" fill="#c2c7d1" stroke="#7a8190" stroke-width="0.9"/><path d="M13 22.5h11M18.5 19v7" fill="none" stroke="#7a8190" stroke-width="0.9"/></svg><div class="a" style="left:799.5px;top:109px;width:1px;height:23px;background:#8f9db8"></div><div class="a" style="left:800.5px;top:109px;width:1px;height:23px;background:#d3dbe8"></div><svg class="a" style="left:805px;top:105.8px" width="28" height="34" viewBox="0 0 28 34"><rect x="4" y="8" width="7" height="2.6" fill="#222"/><path d="M12 4.5h10a2.5 2.5 0 0 1 2.5 2.5v4a2.5 2.5 0 0 1 -2.5 2.5h-5.5l-2 3v-3h-2a2.5 2.5 0 0 1 -2.5 -2.5v-4a2.5 2.5 0 0 1 2.5 -2.5z" fill="#fff" stroke="#333" stroke-width="1.1"/><path d="M12 8h9.5M12 10.5h9.5" fill="none" stroke="#888" stroke-width="0.9"/><path d="M4 22.5h4.5M8.8 18.5v8M12 18.5v8" fill="none" stroke="#0a0a0a" stroke-width="1.4"/><rect x="14" y="18.5" width="11" height="8" fill="#fff" stroke="#2030c0" stroke-width="0.9"/><rect x="14" y="18.5" width="11" height="2.8" fill="#2030c0"/><rect x="14.8" y="19" width="5" height="1.6" fill="#20c8a0"/><path d="M14 24h11M19.5 21.3v5.2" fill="none" stroke="#2030c0" stroke-width="0.9"/></svg><div class="a" style="left:836.5px;top:109px;width:1px;height:23px;background:#8f9db8"></div><div class="a" style="left:837.5px;top:109px;width:1px;height:23px;background:#d3dbe8"></div><svg class="a" style="left:841px;top:104px" width="28" height="34" viewBox="0 0 28 34"><path d="M5 6h13l-4 5h6v4l-9 10-5-3 7-8H5z" fill="#7a8190"/></svg><svg class="a" style="left:869px;top:104px" width="28" height="34" viewBox="0 0 28 34"><rect x="4.5" y="7" width="15" height="18" fill="#e4e7ed" stroke="#7a8190" stroke-width="1.3"/><path d="M7 11h10M7 14h10M7 17h6" fill="none" stroke="#7a8190" stroke-width="1.1"/><rect x="13" y="15" width="11" height="8" fill="#c2c7d1" stroke="#7a8190" stroke-width="1"/></svg><svg class="a" style="left:897px;top:104px" width="28" height="34" viewBox="0 0 28 34"><path d="M3 17l5-5v10z" fill="#7a8190"/><rect x="8" y="7" width="11" height="9" fill="#e4e7ed" stroke="#7a8190" stroke-width="1"/><path d="M19.46 20.46L22.66 23.66" stroke="#8d96a9" stroke-width="2.6" fill="none"/><circle cx="16" cy="17" r="4.8" fill="#cdd4e1" stroke="#8d96a9" stroke-width="1.5"/></svg><svg class="a" style="left:925px;top:104px" width="28" height="34" viewBox="0 0 28 34"><path d="M4 12v12l6-6z" fill="#7a8190"/><rect x="9" y="6" width="11" height="9" fill="#e4e7ed" stroke="#7a8190" stroke-width="1"/><path d="M19.46 19.96L22.66 23.16" stroke="#8d96a9" stroke-width="2.6" fill="none"/><circle cx="16" cy="16.5" r="4.8" fill="#cdd4e1" stroke="#8d96a9" stroke-width="1.5"/></svg><svg class="a" style="left:953px;top:104px" width="28" height="34" viewBox="0 0 28 34"><path d="M3 11.5h5M6 8.5l3.5 3-3.5 3z" fill="#7a8190" stroke="#7a8190" stroke-width="1.2"/><path d="M11 8h3M11 12h3M11 16h3M11 20h3" fill="none" stroke="#9aa1ae" stroke-width="1.6" stroke-dasharray="1.5 1"/><path d="M15 8.5h9M15 12.5h9M15 16.5h9" fill="none" stroke="#c2c7d1" stroke-width="2"/><path d="M15 24h9" fill="none" stroke="#7a8190" stroke-width="2.2"/></svg><svg class="a" style="left:981px;top:104px" width="28" height="34" viewBox="0 0 28 34"><path d="M10 11.5H5M7 8.5l-3.5 3 3.5 3z" fill="#7a8190" stroke="#7a8190" stroke-width="1.2"/><path d="M12 8.5h12M12 12.5h12M12 16.5h12" fill="none" stroke="#c2c7d1" stroke-width="2"/><path d="M12 20.5h3" fill="none" stroke="#9aa1ae" stroke-width="1.6"/><path d="M15 24h9" fill="none" stroke="#7a8190" stroke-width="2.2"/></svg><div class="a" style="left:1011.5px;top:109px;width:1px;height:23px;background:#8f9db8"></div><div class="a" style="left:1012.5px;top:109px;width:1px;height:23px;background:#d3dbe8"></div><svg class="a" style="left:1016px;top:104px" width="28" height="34" viewBox="0 0 28 34"><path d="M3 10h5M8.3 7v6M11.3 7v6M11.5 10h5.5M17 7v6M20 7v6M20.2 10h3M3 16.5h5M8.3 13.5v6M11.3 13.5v6M11.5 16.5h3.5v7.5h4M18.5 21v6M21.5 21v6M21.7 24h2.3M18 16.5h6" fill="none" stroke="#1a30e6" stroke-width="1.4"/></svg><div class="a" style="left:1045px;top:107px;width:27.5px;height:27.5px;background:#fff0c4;border:1px solid #e5c365;box-sizing:border-box;border-radius:1px"></div><svg class="a" style="left:1044px;top:104px" width="28" height="34" viewBox="0 0 28 34"><path d="M3 10h5M8.3 7v6M11.3 7v6M11.5 10h5.5M17 7v6M20 7v6M20.2 10h3M3 16.5h5M8.3 13.5v6M11.3 13.5v6M11.5 16.5h3.5v7.5h4M18.5 21v6M21.5 21v6M21.7 24h2.3M18 16.5h6" fill="none" stroke="#1a30e6" stroke-width="1.4"/><g transform="translate(11.5 14.5) rotate(-40) scale(1.05)"><path d="M0 0L3.2 -2.3V2.3z" fill="#e8c878" stroke="#6b5a2a" stroke-width="0.5"/><path d="M0 0L1.4 -1V1z" fill="#222"/><rect x="3.2" y="-2.3" width="8.2" height="4.6" fill="#f01818" stroke="#8a0a0a" stroke-width="0.6" rx="0.8"/><rect x="3.4" y="-1.9" width="7.8" height="1.3" fill="#8fe08f"/></g></svg><svg class="a" style="left:1073px;top:104px" width="28" height="34" viewBox="0 0 28 34"><rect x="9" y="9" width="9" height="11" fill="#e4e4e4" stroke="#555" stroke-width="1"/><path d="M10.5 12h6M10.5 14.5h6M10.5 17h6" fill="none" stroke="#555" stroke-width="1"/><circle cx="14" cy="13.5" r="7.2" fill="none" stroke="#2030e0" stroke-width="1.3"/><path d="M19 19L24.5 24" stroke="#2030e0" stroke-width="1.4" fill="none"/><rect x="3.5" y="21.5" width="11" height="5" fill="#7a0a10" stroke="#1a0406" stroke-width="0.8"/><rect x="6" y="22.5" width="7.5" height="3" fill="#f4f4f4"/></svg><svg class="a" style="left:1101px;top:104px" width="28" height="34" viewBox="0 0 28 34"><rect x="9" y="10" width="9" height="10" fill="#e4e4e4" stroke="#555" stroke-width="1"/><path d="M10.5 14.5h6M10.5 17h6" fill="none" stroke="#555" stroke-width="1"/><circle cx="14" cy="14.5" r="7" fill="none" stroke="#2030e0" stroke-width="1.3"/><path d="M19 20L24.5 24.5" stroke="#2030e0" stroke-width="1.4" fill="none"/><rect x="3.5" y="21.5" width="11" height="5" fill="#7a0a10" stroke="#1a0406" stroke-width="0.8"/><rect x="6" y="22.5" width="7.5" height="3" fill="#f4f4f4"/><g transform="translate(13 14.5) rotate(-40) scale(1.05)"><path d="M0 0L3.2 -2.3V2.3z" fill="#e8c878" stroke="#6b5a2a" stroke-width="0.5"/><path d="M0 0L1.4 -1V1z" fill="#222"/><rect x="3.2" y="-2.3" width="8.2" height="4.6" fill="#f01818" stroke="#8a0a0a" stroke-width="0.6" rx="0.8"/><rect x="3.4" y="-1.9" width="7.8" height="1.3" fill="#8fe08f"/></g></svg><svg class="a" style="left:1129px;top:104px" width="28" height="34" viewBox="0 0 28 34"><rect x="3" y="6" width="22" height="9" fill="#1060e8"/><text x="4" y="14.1" font-size="9.5" fill="#e8f0ff" font-family="Liberation Sans,sans-serif" font-weight="bold" textLength="20" lengthAdjust="spacingAndGlyphs">Dev</text><rect x="3" y="15" width="14" height="5" fill="#1060e8"/><path d="M20.31 23.81L23.71 27.21" stroke="#2a1a10" stroke-width="3" fill="none"/><path d="M21.11 24.61L23.51 27.01" stroke="#c4733a" stroke-width="1.7" fill="none"/><circle cx="17" cy="20.5" r="4.6" fill="#fff" stroke="#111" stroke-width="1.6"/><path d="M14.47 20.5a2.53 2.53 0 0 1 2.53 -2.53" fill="none" stroke="#c9d2e0" stroke-width="0.9"/></svg><svg class="a" style="left:1158px;top:104px" width="28" height="34" viewBox="0 0 28 34"><rect x="3" y="6" width="17" height="8" fill="#1060e8"/><text x="4" y="13.1" font-size="8.5" fill="#e8f0ff" font-family="Liberation Sans,sans-serif" font-weight="bold" textLength="15" lengthAdjust="spacingAndGlyphs">Dev</text><rect x="15" y="17" width="10" height="8.5" fill="#1060c8"/><path d="M4.5 15v7h5v-2.5l5 4-5 4V25H4.5" fill="#ff9a1a" stroke="#c85a00" stroke-width="0.8"/><g transform="translate(13.5 18) rotate(-40) scale(1.05)"><path d="M0 0L3.2 -2.3V2.3z" fill="#e8c878" stroke="#6b5a2a" stroke-width="0.5"/><path d="M0 0L1.4 -1V1z" fill="#222"/><rect x="3.2" y="-2.3" width="8.2" height="4.6" fill="#3fb83f" stroke="#1d7a1d" stroke-width="0.6" rx="0.8"/><rect x="3.4" y="-1.9" width="7.8" height="1.3" fill="#8fe08f"/></g></svg><svg class="a" style="left:1186px;top:104px" width="28" height="34" viewBox="0 0 28 34"><rect x="15" y="11" width="4.6" height="14.5" fill="#9299a6" stroke="#747b88" stroke-width="0.6"/><rect x="8" y="22.8" width="7.5" height="2.7" fill="#747b88"/><rect x="7" y="16" width="8.5" height="2.4" fill="#9299a6"/><path d="M3.5 8.5h2.6V5.9h2.8v2.6h2.6v2.8H8.9v2.6H6.1v-2.6H3.5z" fill="#e6e9ef" stroke="#747b88" stroke-width="0.9"/></svg><svg class="a" style="left:1214px;top:104px" width="28" height="34" viewBox="0 0 28 34"><rect x="15" y="11" width="4.6" height="14.5" fill="#9299a6" stroke="#747b88" stroke-width="0.6"/><rect x="8" y="22.8" width="7.5" height="2.7" fill="#747b88"/><rect x="7" y="16" width="8.5" height="2.4" fill="#9299a6"/><rect x="3.5" y="8.2" width="9" height="3" fill="#e6e9ef" stroke="#747b88" stroke-width="0.9"/></svg><svg class="a" style="left:1242px;top:104px" width="28" height="34" viewBox="0 0 28 34"><rect x="5" y="7" width="3" height="1.6" fill="#747b88"/><path d="M8.5 8h13M11 16h10.5M8 24h13.5" fill="none" stroke="#747b88" stroke-width="2.3"/><path d="M11 12h10.5M11 20h10.5" fill="none" stroke="#bcc2cd" stroke-width="2.2"/></svg><svg class="a" style="left:1269px;top:104px" width="28" height="34" viewBox="0 0 28 34"><circle cx="14" cy="9.5" r="4" fill="#e6e9ef" stroke="#9299a6" stroke-width="1.5"/><path d="M6.5 9.5h4M8.5 7l-2.5 2.5L8.5 12" fill="none" stroke="#747b88" stroke-width="1.5"/><path d="M8 18h13" fill="none" stroke="#bcc2cd" stroke-width="1.6"/><path d="M7 24.5h15" fill="none" stroke="#747b88" stroke-width="1.9"/></svg><svg class="a" style="left:1297px;top:104px" width="28" height="34" viewBox="0 0 28 34"><path d="M5.5 6v20" fill="none" stroke="#747b88" stroke-width="2.3"/><path d="M6.5 12l5.5 6h10" fill="none" stroke="#9299a6" stroke-width="1.5"/><path d="M6.5 25h16" fill="none" stroke="#9299a6" stroke-width="1.7"/><path d="M13 15.5l8.5-5" fill="none" stroke="#9299a6" stroke-width="1.5"/><circle cx="9.5" cy="15.5" r="2.3" fill="none" stroke="#9299a6" stroke-width="1.1"/></svg><svg class="a" style="left:1325px;top:105.8px" width="28" height="34" viewBox="0 0 28 34"><rect x="3.5" y="8" width="6" height="2.6" fill="#747b88"/><path d="M11 4.5h10a2.5 2.5 0 0 1 2.5 2.5v3.5a2.5 2.5 0 0 1 -2.5 2.5h-5.5l-2 3v-3h-2a2.5 2.5 0 0 1 -2.5 -2.5v-3.5a2.5 2.5 0 0 1 2.5 -2.5z" fill="#bcc2cd" stroke="#747b88" stroke-width="1.1"/><path d="M11 7.3h10M11 10h10" fill="none" stroke="#e6e9ef" stroke-width="1"/><path d="M4 22.5h4M8.3 19v7M11.3 19v7" fill="none" stroke="#747b88" stroke-width="1.5"/><rect x="13.5" y="19" width="11" height="7" fill="#e6e9ef" stroke="#747b88" stroke-width="1"/><path d="M13.5 22.5h11M19 19v7" fill="none" stroke="#747b88" stroke-width="1"/></svg><div class="a" style="left:1356.5px;top:109px;width:1px;height:23px;background:#8f9db8"></div><div class="a" style="left:1357.5px;top:109px;width:1px;height:23px;background:#d3dbe8"></div><svg class="a" style="left:1363px;top:105.8px" width="28" height="34" viewBox="0 0 28 34"><rect x="13" y="5.5" width="10" height="7.5" fill="#f0f0f0" stroke="#9a9a9a" stroke-width="0.8"/><path d="M13 9.2h10M18 5.5v7.5" fill="none" stroke="#9a9a9a" stroke-width="0.8"/><path d="M16 5.5L16 13" stroke="#2030e0" stroke-width="1" fill="none"/><rect x="4" y="15" width="10" height="11" fill="#0a0a0a"/><rect x="5" y="16" width="5.5" height="4" fill="#c8c820"/><rect x="5" y="21" width="6" height="4" fill="#d0d0d0"/><path d="M5 6v8h2.5V12l4.5-2.5L7.5 7v2z" fill="#1030f0"/></svg><svg class="a" style="left:1390px;top:105.8px" width="28" height="34" viewBox="0 0 28 34"><rect x="3" y="5.5" width="4" height="7.5" fill="#f0f0f0" stroke="#9a9a9a" stroke-width="0.8"/><rect x="14" y="5.5" width="10" height="7.5" fill="#f0f0f0" stroke="#9a9a9a" stroke-width="0.8"/><path d="M14 9.2h10M19 5.5v7.5" fill="none" stroke="#9a9a9a" stroke-width="0.8"/><path d="M17 5.5L17 13" stroke="#2030e0" stroke-width="1" fill="none"/><rect x="4" y="15" width="10" height="11" fill="#0a0a0a"/><rect x="5" y="16" width="5.5" height="4" fill="#c8c820"/><rect x="5" y="21" width="6" height="4" fill="#d0d0d0"/><path d="M14 9.5L8.5 6v2.2H5.5v3h3V13.5z" fill="#f01010"/></svg><div class="a" style="left:226px;top:138px;width:1494px;height:838px;background:#2b3c5e;"></div><div class="a" style="left:226px;top:138px;width:1490px;height:28px;background:#2c3d5f radial-gradient(#314468 0.8px,transparent 1px) 0 0/4px 4px"></div><div class="t" style="left:231px;top:142px;height:21px;color:#e8ecf4"><span style="font-size:15px;">]</span></div><svg class="a" style="left:274.5px;top:143px" width="18" height="21" viewBox="0 0 18 21"><path d="M1 1h10.5l4.5 4.5v13.5H1z" fill="#fff" stroke="#3a3a3a" stroke-width="0.7"/><path d="M11.5 1v4.5h4.5" fill="#dcdcdc" stroke="#3a3a3a" stroke-width="0.6"/><rect x="1.4" y="17" width="14.2" height="2" fill="#d4d4d4"/><rect x="14.4" y="6" width="1.4" height="12.5" fill="#e2e2e2"/><path d="M2.41 10.6h3.9M6.18 6.57v8.06M9.82 6.57v8.06M9.69 10.6h3.9" fill="none" stroke="#f01010" stroke-width="2.41"/></svg><div class="t" style="left:296.5px;top:142.7px;height:21px;color:#fff"><span style="font-size:15.5px;">Init_Step [PRG] [LD] 888</span><span style="font-size:15px;">步</span></div><svg class="a" style="left:513.5px;top:143px" width="18" height="21" viewBox="0 0 18 21"><rect x="0.8" y="1" width="17" height="17.5" fill="#fff" stroke="#2a2a2a" stroke-width="0.9" rx="1.5"/><text x="9.3" y="14" font-size="9" fill="#111" font-family="Liberation Sans,sans-serif" font-weight="bold" text-anchor="middle" textLength="12" lengthAdjust="spacingAndGlyphs">ST</text></svg><div class="t" style="left:537.7px;top:142.7px;height:21px;color:#fff"><span style="font-size:15.5px;letter-spacing:0.02px;">Axis_Position [PRG] [ST] 759</span><span style="font-size:15px;">步</span></div><svg class="a" style="left:787px;top:143px" width="18" height="21" viewBox="0 0 18 21"><path d="M1 1h10.5l4.5 4.5v13.5H1z" fill="#fff" stroke="#3a3a3a" stroke-width="0.7"/><path d="M11.5 1v4.5h4.5" fill="#dcdcdc" stroke="#3a3a3a" stroke-width="0.6"/><rect x="1.4" y="17" width="14.2" height="2" fill="#d4d4d4"/><rect x="14.4" y="6" width="1.4" height="12.5" fill="#e2e2e2"/><path d="M2.41 10.6h3.9M6.18 6.57v8.06M9.82 6.57v8.06M9.69 10.6h3.9" fill="none" stroke="#f01010" stroke-width="2.41"/></svg><div class="t" style="left:810px;top:142.7px;height:21px;color:#fff"><span style="font-size:15.5px;letter-spacing:-0.07px;">Mater_Clear [PRG] [LD] (</span><span style="font-size:15px;">只读</span><span style="font-size:15.5px;letter-spacing:-0.07px;">)...</span></div><svg class="a" style="left:1062px;top:143px" width="18" height="21" viewBox="0 0 18 21"><path d="M1 1h10.5l4.5 4.5v13.5H1z" fill="#fff" stroke="#3a3a3a" stroke-width="0.7"/><path d="M11.5 1v4.5h4.5" fill="#dcdcdc" stroke="#3a3a3a" stroke-width="0.6"/><rect x="1.4" y="17" width="14.2" height="2" fill="#d4d4d4"/><rect x="14.4" y="6" width="1.4" height="12.5" fill="#e2e2e2"/><path d="M2.41 10.6h3.9M6.18 6.57v8.06M9.82 6.57v8.06M9.69 10.6h3.9" fill="none" stroke="#f01010" stroke-width="2.41"/></svg><div class="t" style="left:1084.7px;top:142.7px;height:21px;color:#fff"><span style="font-size:15.5px;letter-spacing:-0.15px;">Axis_Up [PRG] [LD] (</span><span style="font-size:15px;">只读</span><span style="font-size:15.5px;letter-spacing:-0.15px;">) 65...</span></div><svg class="a" style="left:1337px;top:143px" width="18" height="21" viewBox="0 0 18 21"><path d="M1 1h10.5l4.5 4.5v13.5H1z" fill="#fff" stroke="#3a3a3a" stroke-width="0.7"/><path d="M11.5 1v4.5h4.5" fill="#dcdcdc" stroke="#3a3a3a" stroke-width="0.6"/><rect x="1.4" y="17" width="14.2" height="2" fill="#d4d4d4"/><rect x="14.4" y="6" width="1.4" height="12.5" fill="#e2e2e2"/><path d="M2.41 10.6h3.9M6.18 6.57v8.06M9.82 6.57v8.06M9.69 10.6h3.9" fill="none" stroke="#f01010" stroke-width="2.41"/></svg><div class="t" style="left:1359px;top:142.7px;height:21px;color:#fff"><span style="font-size:15.5px;letter-spacing:-0.1px;">Axis_Down [PRG] [LD] (</span><span style="font-size:15px;">只读</span><span style="font-size:15.5px;letter-spacing:-0.1px;">) ...</span></div><svg class="a" style="left:249px;top:147px" width="12" height="12" stroke="#3a4c70" stroke-width="1.6"><path d="M1 1l10 10M11 1L1 11"/></svg><svg class="a" style="left:492px;top:147px" width="12" height="12" stroke="#3a4c70" stroke-width="1.6"><path d="M1 1l10 10M11 1L1 11"/></svg><svg class="a" style="left:765px;top:147px" width="12" height="12" stroke="#3a4c70" stroke-width="1.6"><path d="M1 1l10 10M11 1L1 11"/></svg><svg class="a" style="left:1039px;top:147px" width="12" height="12" stroke="#3a4c70" stroke-width="1.6"><path d="M1 1l10 10M11 1L1 11"/></svg><svg class="a" style="left:1312px;top:147px" width="12" height="12" stroke="#3a4c70" stroke-width="1.6"><path d="M1 1l10 10M11 1L1 11"/></svg><svg class="a" style="left:1589px;top:147px" width="12" height="12" stroke="#3a4c70" stroke-width="1.6"><path d="M1 1l10 10M11 1L1 11"/></svg><div class="a" style="left:1604.5px;top:139px;width:56px;height:28px;background:linear-gradient(#fffdf4,#fff4d2 46%,#fde9a5 54%,#fde9a5);border-radius:4px 0 0 0"></div><svg class="a" style="left:1612.5px;top:143px" width="18" height="21" viewBox="0 0 18 21"><path d="M1 1h10.5l4.5 4.5v13.5H1z" fill="#fff" stroke="#3a3a3a" stroke-width="0.7"/><path d="M11.5 1v4.5h4.5" fill="#dcdcdc" stroke="#3a3a3a" stroke-width="0.6"/><rect x="1.4" y="17" width="14.2" height="2" fill="#d4d4d4"/><rect x="14.4" y="6" width="1.4" height="12.5" fill="#e2e2e2"/><path d="M2.41 10.6h3.9M6.18 6.57v8.06M9.82 6.57v8.06M9.69 10.6h3.9" fill="none" stroke="#f01010" stroke-width="2.41"/></svg><div class="a" style="left:1635px;top:140px;width:25px;height:26px;overflow:hidden"><div class="t" style="left:0px;top:2.45px;height:21.5px;color:#000"><span style="font-size:15.5px;">Manual</span></div></div><svg class="a" style="left:1665px;top:143px" width="50" height="16" fill="#c7d0e1"><path d="M1 7.5L7.6 1v13zM25 7.5L18.6 1v13zM33 1.5h14v2.6H33zM33.4 5.8h13.2L40 12.8z"/></svg><div class="a" style="left:0px;top:138px;width:226px;height:28px;background:linear-gradient(#50638a,#465a82 40%,#3b4e76);border-top-right-radius:5px;"></div><div class="t" style="left:5px;top:142.7px;height:21px;color:#fff"><span style="font-size:15px;">导航</span></div><svg class="a" style="left:185.5px;top:146px" width="10" height="15" fill="none" stroke="#fff" stroke-width="1.25"><path d="M2.9 1h4.2v7H2.9zM.9 8.3h8.2M5 8.5v5.6"/><path d="M6.4 1.2v6.6" stroke-width="1.6"/></svg><svg class="a" style="left:207.5px;top:147.5px" width="11" height="11" stroke="#fff" stroke-width="1.5"><path d="M1.5 1.5l8 8M9.5 1.5l-8 8"/></svg><div class="a" style="left:0px;top:166px;width:226px;height:700px;background:#bdc9dd;box-shadow:inset 1.5px 0 #9aa0ac, inset 0 1px #8d95a3"></div><div class="a" style="left:224px;top:167px;width:2px;height:699px;background:#e9eef6;"></div><div class="a" style="left:5px;top:168px;width:219px;height:71px;background:#bfcade;border-radius:3px;box-shadow:inset 0 1px #d3dcea"></div><svg class="a" style="left:12px;top:177px" width="28" height="17" viewBox="0 0 28 17"><rect x="0.7" y="0.7" width="5.8" height="4.8" fill="#fff" stroke="#222" stroke-width="1.1"/><path d="M2.2 3.1L5 3.1" stroke="#222" stroke-width="0.9" fill="none"/><path d="M8.5 4.5V13.5H15M8.5 4.5h6" fill="none" stroke="#1a1a3a" stroke-width="1.3"/><path d="M11.5 5.3h4.6L13.8 8.3zM11.5 12.5h4.6L13.8 9.5z" fill="#e01818"/><path d="M19.5 6.5h5.6l-2.8 3.2z" fill="#1b2a4e"/></svg><svg class="a" style="left:58px;top:177px" width="16" height="10" viewBox="0 0 16 10"><rect x="0.7" y="0.7" width="5.8" height="4.8" fill="#fff" stroke="#222" stroke-width="1.1"/><path d="M2.2 3.1L5 3.1" stroke="#222" stroke-width="0.9" fill="none"/><path d="M15.5 4h-7v5h7" fill="none" stroke="#1a1a3a" stroke-width="1.3"/></svg><svg class="a" style="left:93.7px;top:176.7px" width="17" height="17" viewBox="0 0 17 17"><g transform="translate(8.3 8.3)"><rect x="-1.7" y="-8.3" width="3.4" height="4" fill="#333" transform="rotate(0)"/><rect x="-1.7" y="-8.3" width="3.4" height="4" fill="#333" transform="rotate(45)"/><rect x="-1.7" y="-8.3" width="3.4" height="4" fill="#333" transform="rotate(90)"/><rect x="-1.7" y="-8.3" width="3.4" height="4" fill="#333" transform="rotate(135)"/><rect x="-1.7" y="-8.3" width="3.4" height="4" fill="#333" transform="rotate(180)"/><rect x="-1.7" y="-8.3" width="3.4" height="4" fill="#333" transform="rotate(225)"/><rect x="-1.7" y="-8.3" width="3.4" height="4" fill="#333" transform="rotate(270)"/><rect x="-1.7" y="-8.3" width="3.4" height="4" fill="#333" transform="rotate(315)"/><circle cx="0" cy="0" r="4.4" fill="none" stroke="#333" stroke-width="3.3"/></g></svg><div class="a" style="left:47px;top:174px;width:1px;height:22px;background:#8f9db8;"></div><div class="a" style="left:48px;top:174px;width:1px;height:22px;background:#d6deeb;"></div><div class="a" style="left:83px;top:174px;width:1px;height:22px;background:#8f9db8;"></div><div class="a" style="left:84px;top:174px;width:1px;height:22px;background:#d6deeb;"></div><div class="a" style="left:10px;top:202.5px;width:211px;height:1px;background:#a5b1c8;"></div><div class="a" style="left:10px;top:203.5px;width:211px;height:1.2px;background:#f2f5fa;"></div><div class="a" style="left:7px;top:207.5px;width:99.5px;height:28px;background:#fff;border:1px solid #a8b3c7;box-sizing:border-box"></div><div class="a" style="left:90px;top:209px;width:15.5px;height:25px;background:#b9c6db;"></div><svg class="a" style="left:92px;top:219px" width="10" height="6"><path d="M.3 .3h9.2L4.9 5.2z" fill="#1b2a4e"/></svg><div class="t" style="left:11px;top:211px;height:21px;color:#000"><span style="font-size:15px;">全部</span></div><div class="a" style="left:3px;top:239.5px;width:221px;height:625.5px;background:#34496b;box-shadow:inset 0 1px #7d98cf, inset 1px 0 #4d6aa0"></div><div class="a" style="left:3px;top:864px;width:221px;height:1.2px;background:#7d98cf;"></div><div class="a" style="left:223px;top:240px;width:1px;height:625px;background:#6f93d9;"></div><div class="a" style="left:3px;top:240px;width:187px;height:625px;overflow:hidden"><svg class="a" style="left:118px;top:7px" width="10" height="12" viewBox="0 0 10 12"><path d="M.6 .6h5.6l3 3v7.6H.6z" fill="#fff" stroke="#bbb" stroke-width="0.6"/><rect x="0.9" y="9.2" width="8" height="1.8" fill="#c8c8c8"/><path d="M1.6 6.3h2.16M3.69 4.07v4.46M5.71 4.07v4.46M5.64 6.3h2.16" fill="none" stroke="#f01010" stroke-width="1.04"/></svg><div class="t" style="left:133px;top:2px;height:21px;color:#fff"><span style="font-size:15px;">绝对定位</span></div><svg class="a" style="left:118px;top:32px" width="10" height="12" viewBox="0 0 10 12"><path d="M.6 .6h5.6l3 3v7.6H.6z" fill="#fff" stroke="#bbb" stroke-width="0.6"/><rect x="0.9" y="9.2" width="8" height="1.8" fill="#c8c8c8"/><path d="M1.6 6.3h2.16M3.69 4.07v4.46M5.71 4.07v4.46M5.64 6.3h2.16" fill="none" stroke="#f01010" stroke-width="1.04"/></svg><div class="t" style="left:133px;top:27px;height:21px;color:#fff"><span style="font-size:15.5px;">END</span></div><svg class="a" style="left:57px;top:57px" width="12" height="11" viewBox="0 0 12 11"><rect x="0.5" y="0.5" width="11" height="10" fill="url(#sq3)" stroke="#8a8a8a" stroke-width="1"/><rect x="2.6" y="4.8" width="6.8" height="1.4" fill="#2a4a9a"/></svg><svg class="a" style="left:75px;top:53px" width="20" height="19" viewBox="0 0 20 19"><path d="M1.5 5.5h4l1 1.5V17h9.5v1.2H1.5z" fill="#f0b828" stroke="#8a6410" stroke-width="0.8"/><path d="M16.5 12.5v5.7" fill="none" stroke="#c8a040" stroke-width="1"/><path d="M5.5 1h8l3.5 3.5V15.5H5.5z" fill="#fff" stroke="#9a9a9a" stroke-width="0.7"/><path d="M13.5 1v3.5H17" fill="#dcdcdc" stroke="#9a9a9a" stroke-width="0.6"/><rect x="6" y="13.3" width="10.5" height="1.8" fill="#d8d8d8"/><path d="M6.92 8h2.85M9.67 5.05v5.89M12.33 5.05v5.89M12.23 8h2.85" fill="none" stroke="#f01010" stroke-width="1.38"/></svg><div class="t" style="left:97px;top:51.75px;height:21.5px;color:#fff"><span style="font-size:15.5px;letter-spacing:0.16px;">Axis_Down</span></div><svg class="a" style="left:93px;top:79px" width="18" height="17" viewBox="0 0 18 17"><path d="M2 1.5h8.5l2 2V11H2z" fill="#e4ecff" stroke="#6a88d0" stroke-width="0.9"/><circle cx="5" cy="7" r="3.3" fill="#9ec0ff" stroke="#3a60c0" stroke-width="0.8"/><rect x="6" y="8.5" width="11" height="8" fill="#fff" stroke="#2030c0" stroke-width="1"/><rect x="6" y="8.5" width="11" height="2.4" fill="#2030c0"/><path d="M6 13.2h11M10 10.8v5.7" fill="none" stroke="#2030c0" stroke-width="0.9"/></svg><div class="t" style="left:114.5px;top:77px;height:21px;color:#fff"><span style="font-size:15px;">局部标签</span></div><svg class="a" style="left:95px;top:104px" width="14" height="17" viewBox="0 0 14 17"><path d="M1 1h7.5l4 4v10.5H1z" fill="#fff" stroke="#8a8a8a" stroke-width="0.7"/><path d="M8.5 1v4h4" fill="#dcdcdc" stroke="#8a8a8a" stroke-width="0.6"/><rect x="1.4" y="13.5" width="10.7" height="2" fill="#d4d4d4"/><rect x="10.9" y="5.5" width="1.4" height="9.5" fill="#e2e2e2"/><path d="M2.32 9h2.85M5.07 6.05v5.89M7.73 6.05v5.89M7.63 9h2.85" fill="none" stroke="#f01010" stroke-width="1.38"/></svg><div class="t" style="left:114.5px;top:102px;height:21px;color:#fff"><span style="font-size:15px;">程序本体</span></div><svg class="a" style="left:118px;top:132px" width="10" height="12" viewBox="0 0 10 12"><path d="M.6 .6h5.6l3 3v7.6H.6z" fill="#fff" stroke="#bbb" stroke-width="0.6"/><rect x="0.9" y="9.2" width="8" height="1.8" fill="#c8c8c8"/><path d="M1.6 6.3h2.16M3.69 4.07v4.46M5.71 4.07v4.46M5.64 6.3h2.16" fill="none" stroke="#f01010" stroke-width="1.04"/></svg><div class="t" style="left:133px;top:127px;height:21px;color:#fff"><span style="font-size:15px;">初始化进</span></div><svg class="a" style="left:118px;top:157px" width="10" height="12" viewBox="0 0 10 12"><path d="M.6 .6h5.6l3 3v7.6H.6z" fill="#fff" stroke="#bbb" stroke-width="0.6"/><rect x="0.9" y="9.2" width="8" height="1.8" fill="#c8c8c8"/><path d="M1.6 6.3h2.16M3.69 4.07v4.46M5.71 4.07v4.46M5.64 6.3h2.16" fill="none" stroke="#f01010" stroke-width="1.04"/></svg><div class="t" style="left:133px;top:152px;height:21px;color:#fff"><span style="font-size:15.5px;">JOG</span><span style="font-size:15px;">控制</span></div><svg class="a" style="left:118px;top:182px" width="10" height="12" viewBox="0 0 10 12"><path d="M.6 .6h5.6l3 3v7.6H.6z" fill="#fff" stroke="#bbb" stroke-width="0.6"/><rect x="0.9" y="9.2" width="8" height="1.8" fill="#c8c8c8"/><path d="M1.6 6.3h2.16M3.69 4.07v4.46M5.71 4.07v4.46M5.64 6.3h2.16" fill="none" stroke="#f01010" stroke-width="1.04"/></svg><div class="t" style="left:133px;top:177px;height:21px;color:#fff"><span style="font-size:15px;">原点回归</span></div><svg class="a" style="left:118px;top:207px" width="10" height="12" viewBox="0 0 10 12"><path d="M.6 .6h5.6l3 3v7.6H.6z" fill="#fff" stroke="#bbb" stroke-width="0.6"/><rect x="0.9" y="9.2" width="8" height="1.8" fill="#c8c8c8"/><path d="M1.6 6.3h2.16M3.69 4.07v4.46M5.71 4.07v4.46M5.64 6.3h2.16" fill="none" stroke="#f01010" stroke-width="1.04"/></svg><div class="t" style="left:133px;top:202px;height:21px;color:#fff"><span style="font-size:15px;">绝对定位</span></div><svg class="a" style="left:118px;top:232px" width="10" height="12" viewBox="0 0 10 12"><path d="M.6 .6h5.6l3 3v7.6H.6z" fill="#fff" stroke="#bbb" stroke-width="0.6"/><rect x="0.9" y="9.2" width="8" height="1.8" fill="#c8c8c8"/><path d="M1.6 6.3h2.16M3.69 4.07v4.46M5.71 4.07v4.46M5.64 6.3h2.16" fill="none" stroke="#f01010" stroke-width="1.04"/></svg><div class="t" style="left:133px;top:227px;height:21px;color:#fff"><span style="font-size:15.5px;">END</span></div><svg class="a" style="left:57px;top:257px" width="12" height="11" viewBox="0 0 12 11"><rect x="0.5" y="0.5" width="11" height="10" fill="url(#sq3)" stroke="#8a8a8a" stroke-width="1"/><rect x="2.6" y="4.8" width="6.8" height="1.4" fill="#2a4a9a"/></svg><svg class="a" style="left:75px;top:253px" width="20" height="19" viewBox="0 0 20 19"><path d="M1.5 5.5h4l1 1.5V17h9.5v1.2H1.5z" fill="#f0b828" stroke="#8a6410" stroke-width="0.8"/><path d="M16.5 12.5v5.7" fill="none" stroke="#c8a040" stroke-width="1"/><path d="M5.5 1h8l3.5 3.5V15.5H5.5z" fill="#fff" stroke="#9a9a9a" stroke-width="0.7"/><path d="M13.5 1v3.5H17" fill="#dcdcdc" stroke="#9a9a9a" stroke-width="0.6"/><rect x="6" y="13.3" width="10.5" height="1.8" fill="#d8d8d8"/><path d="M6.92 8h2.85M9.67 5.05v5.89M12.33 5.05v5.89M12.23 8h2.85" fill="none" stroke="#f01010" stroke-width="1.38"/></svg><div class="t" style="left:97px;top:251.75px;height:21.5px;color:#fff"><span style="font-size:15.5px;letter-spacing:0.02px;">Manual_Cyl</span></div><svg class="a" style="left:93px;top:279px" width="18" height="17" viewBox="0 0 18 17"><path d="M2 1.5h8.5l2 2V11H2z" fill="#e4ecff" stroke="#6a88d0" stroke-width="0.9"/><circle cx="5" cy="7" r="3.3" fill="#9ec0ff" stroke="#3a60c0" stroke-width="0.8"/><rect x="6" y="8.5" width="11" height="8" fill="#fff" stroke="#2030c0" stroke-width="1"/><rect x="6" y="8.5" width="11" height="2.4" fill="#2030c0"/><path d="M6 13.2h11M10 10.8v5.7" fill="none" stroke="#2030c0" stroke-width="0.9"/></svg><div class="t" style="left:114.5px;top:277px;height:21px;color:#fff"><span style="font-size:15px;">局部标签</span></div><div class="a" style="left:0px;top:300px;width:187px;height:25px;background:#fcf3a0;"></div><svg class="a" style="left:95px;top:304px" width="14" height="17" viewBox="0 0 14 17"><path d="M1 1h7.5l4 4v10.5H1z" fill="#fff" stroke="#8a8a8a" stroke-width="0.7"/><path d="M8.5 1v4h4" fill="#dcdcdc" stroke="#8a8a8a" stroke-width="0.6"/><rect x="1.4" y="13.5" width="10.7" height="2" fill="#d4d4d4"/><rect x="10.9" y="5.5" width="1.4" height="9.5" fill="#e2e2e2"/><path d="M2.32 9h2.85M5.07 6.05v5.89M7.73 6.05v5.89M7.63 9h2.85" fill="none" stroke="#f01010" stroke-width="1.38"/></svg><div class="t" style="left:114.5px;top:302px;height:21px;color:#000"><span style="font-size:15px;">程序本体</span></div><svg class="a" style="left:118px;top:332px" width="10" height="12" viewBox="0 0 10 12"><path d="M.6 .6h5.6l3 3v7.6H.6z" fill="#fff" stroke="#bbb" stroke-width="0.6"/><rect x="0.9" y="9.2" width="8" height="1.8" fill="#c8c8c8"/><path d="M1.6 6.3h2.16M3.69 4.07v4.46M5.71 4.07v4.46M5.64 6.3h2.16" fill="none" stroke="#f01010" stroke-width="1.04"/></svg><div class="t" style="left:133px;top:327px;height:21px;color:#fff"><span style="font-size:15.5px;">CYL1</span><span style="font-size:15px;">入料</span></div><svg class="a" style="left:118px;top:357px" width="10" height="12" viewBox="0 0 10 12"><path d="M.6 .6h5.6l3 3v7.6H.6z" fill="#fff" stroke="#bbb" stroke-width="0.6"/><rect x="0.9" y="9.2" width="8" height="1.8" fill="#c8c8c8"/><path d="M1.6 6.3h2.16M3.69 4.07v4.46M5.71 4.07v4.46M5.64 6.3h2.16" fill="none" stroke="#f01010" stroke-width="1.04"/></svg><div class="t" style="left:133px;top:352px;height:21px;color:#fff"><span style="font-size:15.5px;">CYL2</span><span style="font-size:15px;">入料</span></div><svg class="a" style="left:118px;top:382px" width="10" height="12" viewBox="0 0 10 12"><path d="M.6 .6h5.6l3 3v7.6H.6z" fill="#fff" stroke="#bbb" stroke-width="0.6"/><rect x="0.9" y="9.2" width="8" height="1.8" fill="#c8c8c8"/><path d="M1.6 6.3h2.16M3.69 4.07v4.46M5.71 4.07v4.46M5.64 6.3h2.16" fill="none" stroke="#f01010" stroke-width="1.04"/></svg><div class="t" style="left:133px;top:377px;height:21px;color:#fff"><span style="font-size:15.5px;">CYL3</span><span style="font-size:15px;">理料</span></div><svg class="a" style="left:118px;top:407px" width="10" height="12" viewBox="0 0 10 12"><path d="M.6 .6h5.6l3 3v7.6H.6z" fill="#fff" stroke="#bbb" stroke-width="0.6"/><rect x="0.9" y="9.2" width="8" height="1.8" fill="#c8c8c8"/><path d="M1.6 6.3h2.16M3.69 4.07v4.46M5.71 4.07v4.46M5.64 6.3h2.16" fill="none" stroke="#f01010" stroke-width="1.04"/></svg><div class="t" style="left:133px;top:402px;height:21px;color:#fff"><span style="font-size:15.5px;">CYL4</span><span style="font-size:15px;">理料</span></div><svg class="a" style="left:118px;top:432px" width="10" height="12" viewBox="0 0 10 12"><path d="M.6 .6h5.6l3 3v7.6H.6z" fill="#fff" stroke="#bbb" stroke-width="0.6"/><rect x="0.9" y="9.2" width="8" height="1.8" fill="#c8c8c8"/><path d="M1.6 6.3h2.16M3.69 4.07v4.46M5.71 4.07v4.46M5.64 6.3h2.16" fill="none" stroke="#f01010" stroke-width="1.04"/></svg><div class="t" style="left:133px;top:427px;height:21px;color:#fff"><span style="font-size:15.5px;">CYL5</span><span style="font-size:15px;">理料</span></div><svg class="a" style="left:118px;top:457px" width="10" height="12" viewBox="0 0 10 12"><path d="M.6 .6h5.6l3 3v7.6H.6z" fill="#fff" stroke="#bbb" stroke-width="0.6"/><rect x="0.9" y="9.2" width="8" height="1.8" fill="#c8c8c8"/><path d="M1.6 6.3h2.16M3.69 4.07v4.46M5.71 4.07v4.46M5.64 6.3h2.16" fill="none" stroke="#f01010" stroke-width="1.04"/></svg><div class="t" style="left:133px;top:452px;height:21px;color:#fff"><span style="font-size:15.5px;">CYL7</span><span style="font-size:15px;">理料</span></div><svg class="a" style="left:118px;top:482px" width="10" height="12" viewBox="0 0 10 12"><path d="M.6 .6h5.6l3 3v7.6H.6z" fill="#fff" stroke="#bbb" stroke-width="0.6"/><rect x="0.9" y="9.2" width="8" height="1.8" fill="#c8c8c8"/><path d="M1.6 6.3h2.16M3.69 4.07v4.46M5.71 4.07v4.46M5.64 6.3h2.16" fill="none" stroke="#f01010" stroke-width="1.04"/></svg><div class="t" style="left:133px;top:477px;height:21px;color:#fff"><span style="font-size:15.5px;">CYL6</span><span style="font-size:15px;">理料</span></div><svg class="a" style="left:118px;top:507px" width="10" height="12" viewBox="0 0 10 12"><path d="M.6 .6h5.6l3 3v7.6H.6z" fill="#fff" stroke="#bbb" stroke-width="0.6"/><rect x="0.9" y="9.2" width="8" height="1.8" fill="#c8c8c8"/><path d="M1.6 6.3h2.16M3.69 4.07v4.46M5.71 4.07v4.46M5.64 6.3h2.16" fill="none" stroke="#f01010" stroke-width="1.04"/></svg><div class="t" style="left:133px;top:502px;height:21px;color:#fff"><span style="font-size:15.5px;">CYL8</span><span style="font-size:15px;">装配</span></div><svg class="a" style="left:118px;top:532px" width="10" height="12" viewBox="0 0 10 12"><path d="M.6 .6h5.6l3 3v7.6H.6z" fill="#fff" stroke="#bbb" stroke-width="0.6"/><rect x="0.9" y="9.2" width="8" height="1.8" fill="#c8c8c8"/><path d="M1.6 6.3h2.16M3.69 4.07v4.46M5.71 4.07v4.46M5.64 6.3h2.16" fill="none" stroke="#f01010" stroke-width="1.04"/></svg><div class="t" style="left:133px;top:527px;height:21px;color:#fff"><span style="font-size:15.5px;">CYL9</span><span style="font-size:15px;">装配</span></div><svg class="a" style="left:118px;top:557px" width="10" height="12" viewBox="0 0 10 12"><path d="M.6 .6h5.6l3 3v7.6H.6z" fill="#fff" stroke="#bbb" stroke-width="0.6"/><rect x="0.9" y="9.2" width="8" height="1.8" fill="#c8c8c8"/><path d="M1.6 6.3h2.16M3.69 4.07v4.46M5.71 4.07v4.46M5.64 6.3h2.16" fill="none" stroke="#f01010" stroke-width="1.04"/></svg><div class="t" style="left:133px;top:552px;height:21px;color:#fff"><span style="font-size:15.5px;">CYL10</span><span style="font-size:15px;">伸</span></div><svg class="a" style="left:118px;top:582px" width="10" height="12" viewBox="0 0 10 12"><path d="M.6 .6h5.6l3 3v7.6H.6z" fill="#fff" stroke="#bbb" stroke-width="0.6"/><rect x="0.9" y="9.2" width="8" height="1.8" fill="#c8c8c8"/><path d="M1.6 6.3h2.16M3.69 4.07v4.46M5.71 4.07v4.46M5.64 6.3h2.16" fill="none" stroke="#f01010" stroke-width="1.04"/></svg><div class="t" style="left:133px;top:577px;height:21px;color:#fff"><span style="font-size:15.5px;">CYL11</span><span style="font-size:15px;">后</span></div><svg class="a" style="left:118px;top:607px" width="10" height="12" viewBox="0 0 10 12"><path d="M.6 .6h5.6l3 3v7.6H.6z" fill="#fff" stroke="#bbb" stroke-width="0.6"/><rect x="0.9" y="9.2" width="8" height="1.8" fill="#c8c8c8"/><path d="M1.6 6.3h2.16M3.69 4.07v4.46M5.71 4.07v4.46M5.64 6.3h2.16" fill="none" stroke="#f01010" stroke-width="1.04"/></svg><div class="t" style="left:133px;top:602px;height:21px;color:#fff"><span style="font-size:15.5px;">CYL12</span><span style="font-size:15px;">前</span></div></div><div class="a" style="left:202px;top:240.5px;width:21px;height:623.5px;background:#f0f0f0;"></div><div class="a" style="left:203px;top:364px;width:20px;height:203px;background:#c9c9c9;"></div><svg class="a" style="left:208.25px;top:248.1px" width="9.5" height="6.8" fill="none" stroke="#505050" stroke-width="2.1"><path d="M.8 5.7 L4.75 .9 L8.7 5.7"/></svg><svg class="a" style="left:208.25px;top:850.6px" width="9.5" height="6.8" fill="none" stroke="#505050" stroke-width="2.1"><path d="M.8 .9 L4.75 5.7 L8.7 .9"/></svg><div class="a" style="left:0px;top:865.5px;width:226px;height:2.5px;background:#f4f7fb;"></div><div class="a" style="left:0px;top:868px;width:226px;height:32px;background:#2c3d5f radial-gradient(#314468 0.8px,transparent 1px) 0 0/4px 4px"></div><div class="a" style="left:96px;top:868px;width:66px;height:25px;background:#fff;border-radius:0 0 4px 4px"></div><svg class="a" style="left:8px;top:871px" width="20" height="20" viewBox="0 0 20 20"><rect x="1" y="5" width="6" height="12" fill="#fff" stroke="#12a030" stroke-width="1.2"/><rect x="5" y="3" width="11" height="8" fill="#dfe8f7" stroke="#222" stroke-width="1.2"/><rect x="6.6" y="4.6" width="7.8" height="4.8" fill="#444"/><rect x="4" y="12" width="14" height="3.5" fill="#cfcfcf" stroke="#222" stroke-width="0.9"/><rect x="4" y="15.5" width="14" height="3.5" fill="#2a2a2a"/><rect x="14" y="3.5" width="4" height="7" fill="#777" stroke="#111" stroke-width="0.7"/></svg><svg class="a" style="left:103.5px;top:870.5px" width="20" height="20" viewBox="0 0 20 20"><path d="M4.5 8v9h5M4.5 11.5h5" fill="none" stroke="#111" stroke-width="1.4"/><rect x="1.5" y="2.8" width="6" height="4.4" fill="#f5a800" stroke="#6b4a08" stroke-width="0.7"/><rect x="1.5" y="2" width="2.8" height="1.4" fill="#f5a800" stroke="#6b4a08" stroke-width="0.5"/><rect x="9.5" y="9.8" width="6" height="4.4" fill="#f5a800" stroke="#6b4a08" stroke-width="0.7"/><rect x="9.5" y="9" width="2.8" height="1.4" fill="#f5a800" stroke="#6b4a08" stroke-width="0.5"/><rect x="9.5" y="15.4" width="6" height="4.4" fill="#f5a800" stroke="#6b4a08" stroke-width="0.7"/><rect x="9.5" y="14.6" width="2.8" height="1.4" fill="#f5a800" stroke="#6b4a08" stroke-width="0.5"/></svg><div class="t" style="left:30px;top:871px;height:21px;color:#fff"><span style="font-size:15px;">连接目标</span></div><div class="t" style="left:126px;top:871px;height:21px;color:#000"><span style="font-size:15px;">导航</span></div><div class="a" style="left:0px;top:900px;width:226px;height:28px;background:linear-gradient(#50638a,#465a82 40%,#3b4e76);border-top-left-radius:5px;border-top-right-radius:5px;"></div><div class="t" style="left:5px;top:904.7px;height:21px;color:#fff"><span style="font-size:15px;">快速搜索</span></div><svg class="a" style="left:185.5px;top:908px" width="10" height="15" fill="none" stroke="#fff" stroke-width="1.25"><path d="M2.9 1h4.2v7H2.9zM.9 8.3h8.2M5 8.5v5.6"/><path d="M6.4 1.2v6.6" stroke-width="1.6"/></svg><svg class="a" style="left:207.5px;top:909.5px" width="11" height="11" stroke="#fff" stroke-width="1.5"><path d="M1.5 1.5l8 8M9.5 1.5l-8 8"/></svg><div class="a" style="left:0px;top:928px;width:226px;height:48px;background:#a9b6cd;box-shadow:inset 1.5px 0 #9aa0ac"></div><div class="a" style="left:3px;top:929px;width:223px;height:32.5px;background:#bfcade;border-radius:4px;box-shadow:inset 0 1px #d3dcea"></div><div class="t" style="left:12.7px;top:935px;height:21px;color:#16223f"><span style="font-size:15px;">搜索对象</span><span style="font-size:15px;letter-spacing:-0.07px;">: </span><span style="font-size:15px;">全部</span><span style="font-size:15px;letter-spacing:-0.07px;">(A)</span></div><svg class="a" style="left:135px;top:944px" width="8" height="5"><path d="M.2 .2h6.6L3.5 4z" fill="#1b2a4e"/></svg><div class="a" style="left:0px;top:962px;width:226px;height:2px;background:#7d7d7d;"></div><div class="a" style="left:2px;top:964px;width:224px;height:12px;background:#f1f1f1;"></div><div class="a" style="left:232px;top:166px;width:1482px;height:810px;background:#fde9a5;"></div><div class="a" style="left:233.3px;top:170px;width:1478.7px;height:800.5px;background:#fff;"></div><div class="a" style="left:233.3px;top:170px;width:1477.3px;height:2.3px;background:#777;"></div><div class="a" style="left:233.3px;top:170px;width:2.1px;height:799px;background:#777;"></div><div class="a" style="left:235.4px;top:172.3px;width:1474px;height:1.3px;background:#a9a9a9;"></div><div class="a" style="left:235.4px;top:172.3px;width:1.4px;height:797px;background:#a9a9a9;"></div><div class="a" style="left:1708.3px;top:171px;width:3.4px;height:798px;background:linear-gradient(90deg,#e3e3e3,#fff 60%,#e8e8e8)"></div><div class="a" style="left:0;top:0;width:1688.5px;height:948px;overflow:hidden"><div class="a" style="left:236.8px;top:173.6px;width:96.2px;height:21.4px;background:#dde8fa;"></div><div class="t" style="left:239.5px;top:173.5px;height:22px;color:#000"><span style="font-size:16px;">写入</span></div><div class="a" style="left:299px;top:174px;width:1px;height:21px;background:repeating-linear-gradient(#fff 0 1px,transparent 1px 2px)"></div><svg class="a" style="left:318.5px;top:183px" width="7" height="5"><path d="M0 0h6.4L3.2 4.4z" fill="#4a6cb3"/></svg><div class="a" style="left:333px;top:173.6px;width:159px;height:21.4px;background:linear-gradient(#fafcff,#e6eefc 45%,#c6d9f8);box-shadow:inset -1px 0 #7c9edc, inset -2px 0 rgba(255,255,255,.55)"></div><div class="t" style="left:412px;top:172.5px;height:21px;color:#000;width:0;justify-content:center"><span style="font-size:15px;">1</span></div><div class="a" style="left:492px;top:173.6px;width:104px;height:21.4px;background:linear-gradient(#fafcff,#e6eefc 45%,#c6d9f8);box-shadow:inset -1px 0 #7c9edc, inset -2px 0 rgba(255,255,255,.55)"></div><div class="t" style="left:543.5px;top:172.5px;height:21px;color:#000;width:0;justify-content:center"><span style="font-size:15px;">2</span></div><div class="a" style="left:596px;top:173.6px;width:69px;height:21.4px;background:linear-gradient(#fafcff,#e6eefc 45%,#c6d9f8);box-shadow:inset -1px 0 #7c9edc, inset -2px 0 rgba(255,255,255,.55)"></div><div class="t" style="left:630px;top:172.5px;height:21px;color:#000;width:0;justify-content:center"><span style="font-size:15px;">3</span></div><div class="a" style="left:665px;top:173.6px;width:69px;height:21.4px;background:linear-gradient(#fafcff,#e6eefc 45%,#c6d9f8);box-shadow:inset -1px 0 #7c9edc, inset -2px 0 rgba(255,255,255,.55)"></div><div class="t" style="left:699px;top:172.5px;height:21px;color:#000;width:0;justify-content:center"><span style="font-size:15px;">4</span></div><div class="a" style="left:734px;top:173.6px;width:69px;height:21.4px;background:linear-gradient(#fafcff,#e6eefc 45%,#c6d9f8);box-shadow:inset -1px 0 #7c9edc, inset -2px 0 rgba(255,255,255,.55)"></div><div class="t" style="left:768px;top:172.5px;height:21px;color:#000;width:0;justify-content:center"><span style="font-size:15px;">5</span></div><div class="a" style="left:803px;top:173.6px;width:176px;height:21.4px;background:linear-gradient(#fafcff,#e6eefc 45%,#c6d9f8);box-shadow:inset -1px 0 #7c9edc, inset -2px 0 rgba(255,255,255,.55)"></div><div class="t" style="left:890.5px;top:172.5px;height:21px;color:#000;width:0;justify-content:center"><span style="font-size:15px;">6</span></div><div class="a" style="left:979px;top:173.6px;width:69px;height:21.4px;background:linear-gradient(#fafcff,#e6eefc 45%,#c6d9f8);box-shadow:inset -1px 0 #7c9edc, inset -2px 0 rgba(255,255,255,.55)"></div><div class="t" style="left:1013px;top:172.5px;height:21px;color:#000;width:0;justify-content:center"><span style="font-size:15px;">7</span></div><div class="a" style="left:1048px;top:173.6px;width:69px;height:21.4px;background:linear-gradient(#fafcff,#e6eefc 45%,#c6d9f8);box-shadow:inset -1px 0 #7c9edc, inset -2px 0 rgba(255,255,255,.55)"></div><div class="t" style="left:1082px;top:172.5px;height:21px;color:#000;width:0;justify-content:center"><span style="font-size:15px;">8</span></div><div class="a" style="left:1117px;top:173.6px;width:69px;height:21.4px;background:linear-gradient(#fafcff,#e6eefc 45%,#c6d9f8);box-shadow:inset -1px 0 #7c9edc, inset -2px 0 rgba(255,255,255,.55)"></div><div class="t" style="left:1151px;top:172.5px;height:21px;color:#000;width:0;justify-content:center"><span style="font-size:15px;">9</span></div><div class="a" style="left:1186px;top:173.6px;width:69px;height:21.4px;background:linear-gradient(#fafcff,#e6eefc 45%,#c6d9f8);box-shadow:inset -1px 0 #7c9edc, inset -2px 0 rgba(255,255,255,.55)"></div><div class="t" style="left:1220px;top:172.5px;height:21px;color:#000;width:0;justify-content:center"><span style="font-size:15px;">10</span></div><div class="a" style="left:1255px;top:173.6px;width:69px;height:21.4px;background:linear-gradient(#fafcff,#e6eefc 45%,#c6d9f8);box-shadow:inset -1px 0 #7c9edc, inset -2px 0 rgba(255,255,255,.55)"></div><div class="t" style="left:1289px;top:172.5px;height:21px;color:#000;width:0;justify-content:center"><span style="font-size:15px;">11</span></div><div class="a" style="left:1324px;top:173.6px;width:209px;height:21.4px;background:linear-gradient(#fafcff,#e6eefc 45%,#c6d9f8);box-shadow:inset -1px 0 #7c9edc, inset -2px 0 rgba(255,255,255,.55)"></div><div class="t" style="left:1428px;top:172.5px;height:21px;color:#000;width:0;justify-content:center"><span style="font-size:15px;">12</span></div><div class="a" style="left:236.8px;top:195px;width:28.2px;height:19px;background:linear-gradient(#eff5fe,#dce8fb 50%,#c1d5f6);box-shadow:inset -1px 0 #7fa0da, inset 0 -1px #8eaade"></div><div class="t" style="left:240px;top:192.8px;height:21px;color:#000"><span style="font-size:15px;">1</span></div><div class="a" style="left:236.8px;top:214px;width:28.2px;height:38px;background:linear-gradient(#eff5fe,#dce8fb 50%,#c1d5f6);box-shadow:inset -1px 0 #7fa0da, inset 0 -1px #8eaade"></div><div class="t" style="left:240px;top:221.3px;height:21px;color:#000"><span style="font-size:15px;">2</span></div><div class="a" style="left:236.8px;top:252px;width:28.2px;height:117px;background:linear-gradient(#eff5fe,#dce8fb 50%,#c1d5f6);box-shadow:inset -1px 0 #7fa0da, inset 0 -1px #8eaade"></div><div class="t" style="left:240px;top:298.8px;height:21px;color:#000"><span style="font-size:15px;">3</span></div><div class="a" style="left:236.8px;top:369px;width:28.2px;height:117px;background:linear-gradient(#eff5fe,#dce8fb 50%,#c1d5f6);box-shadow:inset -1px 0 #7fa0da, inset 0 -1px #8eaade"></div><div class="t" style="left:240px;top:415.8px;height:21px;color:#000"><span style="font-size:15px;">4</span></div><div class="a" style="left:236.8px;top:486px;width:28.2px;height:117px;background:linear-gradient(#eff5fe,#dce8fb 50%,#c1d5f6);box-shadow:inset -1px 0 #7fa0da, inset 0 -1px #8eaade"></div><div class="t" style="left:240px;top:532.8px;height:21px;color:#000"><span style="font-size:15px;">5</span></div><div class="a" style="left:236.8px;top:603px;width:28.2px;height:117px;background:linear-gradient(#eff5fe,#dce8fb 50%,#c1d5f6);box-shadow:inset -1px 0 #7fa0da, inset 0 -1px #8eaade"></div><div class="t" style="left:240px;top:649.8px;height:21px;color:#000"><span style="font-size:15px;">6</span></div><div class="a" style="left:236.8px;top:720px;width:28.2px;height:117px;background:linear-gradient(#eff5fe,#dce8fb 50%,#c1d5f6);box-shadow:inset -1px 0 #7fa0da, inset 0 -1px #8eaade"></div><div class="t" style="left:240px;top:766.8px;height:21px;color:#000"><span style="font-size:15px;">7</span></div><div class="a" style="left:236.8px;top:837px;width:28.2px;height:116px;background:linear-gradient(#eff5fe,#dce8fb 50%,#c1d5f6);box-shadow:inset -1px 0 #7fa0da, inset 0 -1px #8eaade"></div><div class="t" style="left:240px;top:883.3px;height:21px;color:#000"><span style="font-size:15px;">8</span></div><div class="a" style="left:265px;top:195px;width:1267px;height:18px;background:#9dfdfd;border:1px solid #0a8a0a;box-sizing:border-box"></div><div class="t" style="left:267.5px;top:193.84px;height:19.33px;color:#000"><span style="font-size:13.33px;letter-spacing:0.33px;font-weight:bold;">[Title]CYL2</span><span style="font-size:14.5px;letter-spacing:0.5px;font-weight:bold;">入料</span><span style="font-size:13.33px;letter-spacing:0.33px;font-weight:bold;">_</span><span style="font-size:14.5px;letter-spacing:0.5px;font-weight:bold;">阻挡气缸</span></div><div class="a" style="left:299px;top:214px;width:33px;height:740px;background:#add8e6;"></div><div class="t" style="left:330px;top:215.9px;height:18.2px;color:#3c3c3c;width:0;justify-content:flex-end"><span style="font-size:12.2px;">(231</span></div><div class="t" style="left:329px;top:230.9px;height:18.2px;color:#3c3c3c;width:0;justify-content:flex-end"><span style="font-size:12.2px;">)</span></div><div class="a" style="left:491px;top:214px;width:1px;height:740px;background:repeating-linear-gradient(#bebebe 0 1px,transparent 1px 2px)"></div><div class="a" style="left:595px;top:214px;width:1px;height:740px;background:repeating-linear-gradient(#bebebe 0 1px,transparent 1px 2px)"></div><div class="a" style="left:664px;top:214px;width:1px;height:740px;background:repeating-linear-gradient(#bebebe 0 1px,transparent 1px 2px)"></div><div class="a" style="left:733px;top:214px;width:1px;height:740px;background:repeating-linear-gradient(#bebebe 0 1px,transparent 1px 2px)"></div><div class="a" style="left:802px;top:214px;width:1px;height:740px;background:repeating-linear-gradient(#bebebe 0 1px,transparent 1px 2px)"></div><div class="a" style="left:978px;top:214px;width:1px;height:740px;background:repeating-linear-gradient(#bebebe 0 1px,transparent 1px 2px)"></div><div class="a" style="left:1047px;top:214px;width:1px;height:740px;background:repeating-linear-gradient(#bebebe 0 1px,transparent 1px 2px)"></div><div class="a" style="left:1116px;top:214px;width:1px;height:740px;background:repeating-linear-gradient(#bebebe 0 1px,transparent 1px 2px)"></div><div class="a" style="left:1185px;top:214px;width:1px;height:740px;background:repeating-linear-gradient(#bebebe 0 1px,transparent 1px 2px)"></div><div class="a" style="left:1254px;top:214px;width:1px;height:740px;background:repeating-linear-gradient(#bebebe 0 1px,transparent 1px 2px)"></div><div class="a" style="left:1323px;top:214px;width:1px;height:740px;background:repeating-linear-gradient(#bebebe 0 1px,transparent 1px 2px)"></div><div class="a" style="left:265px;top:213px;width:1267px;height:1px;background:repeating-linear-gradient(90deg,#bebebe 0 1px,transparent 1px 2px)"></div><div class="a" style="left:265px;top:251px;width:34px;height:1px;background:repeating-linear-gradient(90deg,#bebebe 0 1px,transparent 1px 2px)"></div><div class="a" style="left:335px;top:251px;width:1196px;height:1px;background:repeating-linear-gradient(90deg,#bebebe 0 1px,transparent 1px 2px)"></div><div class="a" style="left:299px;top:251px;width:33px;height:1px;background:repeating-linear-gradient(90deg,#e6f1f6 0 1px,transparent 1px 2px)"></div><div class="a" style="left:265px;top:368px;width:34px;height:1px;background:repeating-linear-gradient(90deg,#bebebe 0 1px,transparent 1px 2px)"></div><div class="a" style="left:335px;top:368px;width:1196px;height:1px;background:repeating-linear-gradient(90deg,#bebebe 0 1px,transparent 1px 2px)"></div><div class="a" style="left:299px;top:368px;width:33px;height:1px;background:repeating-linear-gradient(90deg,#e6f1f6 0 1px,transparent 1px 2px)"></div><div class="a" style="left:265px;top:485px;width:34px;height:1px;background:repeating-linear-gradient(90deg,#bebebe 0 1px,transparent 1px 2px)"></div><div class="a" style="left:335px;top:485px;width:1196px;height:1px;background:repeating-linear-gradient(90deg,#bebebe 0 1px,transparent 1px 2px)"></div><div class="a" style="left:299px;top:485px;width:33px;height:1px;background:repeating-linear-gradient(90deg,#e6f1f6 0 1px,transparent 1px 2px)"></div><div class="a" style="left:265px;top:602px;width:34px;height:1px;background:repeating-linear-gradient(90deg,#bebebe 0 1px,transparent 1px 2px)"></div><div class="a" style="left:335px;top:602px;width:1196px;height:1px;background:repeating-linear-gradient(90deg,#bebebe 0 1px,transparent 1px 2px)"></div><div class="a" style="left:299px;top:602px;width:33px;height:1px;background:repeating-linear-gradient(90deg,#e6f1f6 0 1px,transparent 1px 2px)"></div><div class="a" style="left:265px;top:719px;width:34px;height:1px;background:repeating-linear-gradient(90deg,#bebebe 0 1px,transparent 1px 2px)"></div><div class="a" style="left:335px;top:719px;width:1196px;height:1px;background:repeating-linear-gradient(90deg,#bebebe 0 1px,transparent 1px 2px)"></div><div class="a" style="left:299px;top:719px;width:33px;height:1px;background:repeating-linear-gradient(90deg,#e6f1f6 0 1px,transparent 1px 2px)"></div><div class="a" style="left:265px;top:836px;width:34px;height:1px;background:repeating-linear-gradient(90deg,#bebebe 0 1px,transparent 1px 2px)"></div><div class="a" style="left:335px;top:836px;width:1196px;height:1px;background:repeating-linear-gradient(90deg,#bebebe 0 1px,transparent 1px 2px)"></div><div class="a" style="left:299px;top:836px;width:33px;height:1px;background:repeating-linear-gradient(90deg,#e6f1f6 0 1px,transparent 1px 2px)"></div><div class="a" style="left:299px;top:214px;width:1px;height:740px;background:repeating-linear-gradient(#cfe6ef 0 1px,transparent 1px 2px)"></div><div class="a" style="left:332px;top:214px;width:1px;height:740px;background:repeating-linear-gradient(#e9f3f7 0 1px,transparent 1px 2px)"></div><div class="a" style="left:1255px;top:603px;width:68px;height:116px;background:#add8e6;border:2px solid #0a0a9a;box-sizing:border-box"></div><svg class="a" style="left:1257px;top:709px" width="8" height="8"><path d="M0 0h7.5L2.8 7.5H0z" fill="#1e90ff"/></svg><div class="a" style="left:333px;top:214px;width:1px;height:740px;background:#000;"></div><div class="a" style="left:1531px;top:214px;width:1px;height:740px;background:#000;"></div><div class="a" style="left:334px;top:274px;width:404px;height:1px;background:#000;"></div><div class="a" style="left:800px;top:274px;width:3px;height:1px;background:#000;"></div><svg class="a" style="left:737px;top:266px" width="64" height="18" fill="none" stroke="#000" stroke-width="1" shape-rendering="crispEdges"><path d="M6.5 1.5H1.5v15h5M57.5 1.5h5v15h-5"/></svg><div class="t" style="left:768.5px;top:264.33px;height:19.33px;color:#f0f;width:0;justify-content:center"><span style="font-size:13.33px;">System</span></div><div class="a" style="left:334px;top:391px;width:72px;height:1px;background:#000;"></div><div class="a" style="left:419px;top:391px;width:384px;height:1px;background:#000;"></div><div class="a" style="left:406px;top:385px;width:1px;height:13px;background:#000;"></div><div class="a" style="left:418px;top:385px;width:1px;height:13px;background:#000;"></div><div class="t" style="left:337px;top:368.33px;height:19.33px;color:#f0f"><span style="font-size:14px;letter-spacing:1px;">入料阻挡气缸</span><span style="font-size:13.33px;letter-spacing:-0.46px;">.ActSons…</span></div><div class="a" style="left:334px;top:508px;width:72px;height:1px;background:#000;"></div><div class="a" style="left:419px;top:508px;width:384px;height:1px;background:#000;"></div><div class="a" style="left:406px;top:502px;width:1px;height:13px;background:#000;"></div><div class="a" style="left:418px;top:502px;width:1px;height:13px;background:#000;"></div><div class="t" style="left:337px;top:485.33px;height:19.33px;color:#f0f"><span style="font-size:14px;letter-spacing:1px;">入料阻挡气缸</span><span style="font-size:13.33px;letter-spacing:-0.37px;">.BackSo…</span></div><div class="a" style="left:334px;top:625px;width:404px;height:1px;background:#000;"></div><div class="a" style="left:800px;top:625px;width:3px;height:1px;background:#000;"></div><svg class="a" style="left:737px;top:617px" width="64" height="18" fill="none" stroke="#000" stroke-width="1" shape-rendering="crispEdges"><path d="M6.5 1.5H1.5v15h5M57.5 1.5h5v15h-5"/></svg><div class="t" style="left:768.5px;top:615.34px;height:19.33px;color:#464646;width:0;justify-content:center"><span style="font-size:13.33px;">T#3s</span></div><div class="a" style="left:334px;top:742px;width:404px;height:1px;background:#000;"></div><div class="a" style="left:800px;top:742px;width:3px;height:1px;background:#000;"></div><svg class="a" style="left:737px;top:734px" width="64" height="18" fill="none" stroke="#000" stroke-width="1" shape-rendering="crispEdges"><path d="M6.5 1.5H1.5v15h5M57.5 1.5h5v15h-5"/></svg><div class="t" style="left:768.5px;top:732.34px;height:19.33px;color:#464646;width:0;justify-content:center"><span style="font-size:13.33px;">T#0.02s</span></div><div class="a" style="left:334px;top:859px;width:72px;height:1px;background:#000;"></div><div class="a" style="left:419px;top:859px;width:384px;height:1px;background:#000;"></div><div class="a" style="left:406px;top:853px;width:1px;height:13px;background:#000;"></div><div class="a" style="left:418px;top:853px;width:1px;height:13px;background:#000;"></div><div class="t" style="left:337px;top:836.34px;height:19.33px;color:#f0f"><span style="font-size:14px;letter-spacing:1px;">入料阻挡气缸</span><span style="font-size:13.33px;letter-spacing:-0.09px;">.Act_Co…</span></div><div class="a" style="left:803px;top:214px;width:243px;height:745px;background:#fff;border:1px solid #000;box-sizing:border-box"></div><div class="a" style="left:804px;top:215px;width:241px;height:34px;background:linear-gradient(#fcfcfc,#e4e4e4 25%,#b4b4b4 60%,#7f7f7f)"></div><div class="t" style="left:861px;top:216.34px;height:19.33px;color:#f0f"><span style="font-size:13.33px;letter-spacing:-0.13px;">Cyl_FB_2</span></div><div class="t" style="left:930px;top:216.34px;height:19.33px;color:#000"><span style="font-size:13.33px;letter-spacing:-0.2px;">(Cyl_FB)</span></div><div class="t" style="left:807px;top:265.33px;height:19.33px;color:#464646"><span style="font-size:13.33px;letter-spacing:-0.11px;">DUT:  iSystem</span></div><div class="t" style="left:1042.5px;top:265.33px;height:19.33px;color:#464646;width:0;justify-content:flex-end"><span style="font-size:13.33px;">oAct_Output :B</span></div><div class="a" style="left:1046px;top:274px;width:485px;height:1px;background:#000;"></div><svg class="a" style="left:1422px;top:268px" width="13" height="13" shape-rendering="crispEdges"><path d="M4.5 .5h4l4 4v4l-4 4h-4l-4-4v-4z" fill="#fff" stroke="#000" stroke-width="1"/></svg><div class="t" style="left:807px;top:382.33px;height:19.33px;color:#464646"><span style="font-size:13.33px;letter-spacing:-0.03px;">B: iAct_sensor</span></div><div class="t" style="left:1042.5px;top:382.33px;height:19.33px;color:#464646;width:0;justify-content:flex-end"><span style="font-size:13.33px;">oBack_Output :B</span></div><div class="a" style="left:1046px;top:391px;width:485px;height:1px;background:#000;"></div><svg class="a" style="left:1422px;top:385px" width="13" height="13" shape-rendering="crispEdges"><path d="M4.5 .5h4l4 4v4l-4 4h-4l-4-4v-4z" fill="#fff" stroke="#000" stroke-width="1"/></svg><div class="t" style="left:807px;top:499.33px;height:19.33px;color:#464646"><span style="font-size:13.33px;letter-spacing:-0.02px;">B: iBack_sensor</span></div><div class="t" style="left:1042.5px;top:499.33px;height:19.33px;color:#464646;width:0;justify-content:flex-end"><span style="font-size:13.33px;">oAct_Arrive :B</span></div><div class="a" style="left:1046px;top:508px;width:485px;height:1px;background:#000;"></div><svg class="a" style="left:1422px;top:502px" width="13" height="13" shape-rendering="crispEdges"><path d="M4.5 .5h4l4 4v4l-4 4h-4l-4-4v-4z" fill="#fff" stroke="#000" stroke-width="1"/></svg><div class="t" style="left:807px;top:616.34px;height:19.33px;color:#464646"><span style="font-size:13.33px;letter-spacing:-0.31px;">TM: iAlarm_Delay</span></div><div class="t" style="left:1042.5px;top:616.34px;height:19.33px;color:#464646;width:0;justify-content:flex-end"><span style="font-size:13.33px;">oBack_Arrive :B</span></div><div class="a" style="left:1046px;top:625px;width:485px;height:1px;background:#000;"></div><svg class="a" style="left:1422px;top:619px" width="13" height="13" shape-rendering="crispEdges"><path d="M4.5 .5h4l4 4v4l-4 4h-4l-4-4v-4z" fill="#fff" stroke="#000" stroke-width="1"/></svg><div class="t" style="left:807px;top:733.34px;height:19.33px;color:#464646"><span style="font-size:13.33px;letter-spacing:-0.08px;">TM: iSensor_Del...</span></div><div class="t" style="left:1042.5px;top:733.34px;height:19.33px;color:#464646;width:0;justify-content:flex-end"><span style="font-size:13.33px;">oAct_Alarm :B</span></div><div class="a" style="left:1046px;top:742px;width:485px;height:1px;background:#000;"></div><svg class="a" style="left:1422px;top:736px" width="13" height="13" shape-rendering="crispEdges"><path d="M4.5 .5h4l4 4v4l-4 4h-4l-4-4v-4z" fill="#fff" stroke="#000" stroke-width="1"/></svg><div class="t" style="left:807px;top:850.34px;height:19.33px;color:#464646"><span style="font-size:13.33px;letter-spacing:-0.13px;">B: iAct_Condition</span></div><div class="t" style="left:1042.5px;top:850.34px;height:19.33px;color:#464646;width:0;justify-content:flex-end"><span style="font-size:13.33px;">oBack_Alarm :B</span></div><div class="a" style="left:1046px;top:859px;width:485px;height:1px;background:#000;"></div><svg class="a" style="left:1422px;top:853px" width="13" height="13" shape-rendering="crispEdges"><path d="M4.5 .5h4l4 4v4l-4 4h-4l-4-4v-4z" fill="#fff" stroke="#000" stroke-width="1"/></svg><div class="t" style="left:1428px;top:250.34px;height:19.33px;color:#464646;width:0;justify-content:center"><span style="font-size:13.33px;">Y14</span></div><div class="t" style="left:1428px;top:367.33px;height:19.33px;color:#464646;width:0;justify-content:center"><span style="font-size:13.33px;">Y15</span></div><div class="t" style="left:1428px;top:484.83px;height:19.33px;color:#f0f;width:0;justify-content:center"><span style="font-size:14px;letter-spacing:1px;">入料阻挡气缸</span><span style="font-size:13.33px;">.Actsign</span></div><div class="t" style="left:1428px;top:601.84px;height:19.33px;color:#f0f;width:0;justify-content:center"><span style="font-size:14px;letter-spacing:1px;">入料阻挡气缸</span><span style="font-size:13.33px;">.Backsign</span></div><div class="t" style="left:1428px;top:718.84px;height:19.33px;color:#464646;width:0;justify-content:center"><span style="font-size:13.33px;">M7004</span></div><div class="t" style="left:1428px;top:835.84px;height:19.33px;color:#464646;width:0;justify-content:center"><span style="font-size:13.33px;">M7005</span></div><div class="t" style="left:1326px;top:302.33px;height:19.33px;color:#008000"><span style="font-size:13.33px;letter-spacing:0.11px;">CYL2</span><span style="font-size:14px;letter-spacing:1.2px;">阻挡气缸缩回</span></div><div class="t" style="left:1326px;top:419.33px;height:19.33px;color:#008000"><span style="font-size:13.33px;letter-spacing:0.11px;">CYL2</span><span style="font-size:14px;letter-spacing:1.2px;">阻挡气缸伸出</span></div></div><div class="a" style="left:1688.7px;top:173.5px;width:20.7px;height:775px;background:#f0f0f0;"></div><div class="a" style="left:1709.4px;top:171px;width:2.3px;height:800px;background:#fdfdfd;"></div><div class="a" style="left:1689px;top:173.5px;width:19px;height:7px;background:#a9a9a9;"></div><div class="a" style="left:1689.3px;top:201.5px;width:18.4px;height:190px;background:#cdcdcd;"></div><svg class="a" style="left:1693.75px;top:188.7px" width="9.5" height="6.6" fill="none" stroke="#505050" stroke-width="2.1"><path d="M.8 5.5 L4.75 .9 L8.7 5.5"/></svg><svg class="a" style="left:1693.75px;top:933.5px" width="9.5" height="6.8" fill="none" stroke="#505050" stroke-width="2.1"><path d="M.8 .9 L4.75 5.7 L8.7 .9"/></svg><div class="a" style="left:236.8px;top:948px;width:1472.6px;height:20.5px;background:#f0f0f0;"></div><div class="a" style="left:236.8px;top:968.5px;width:1474.8px;height:1.5px;background:#e6e6e6;"></div><div class="a" style="left:236.8px;top:970px;width:1474.8px;height:1.6px;background:#fdfdfd;"></div><svg class="a" style="left:244.5px;top:952.75px" width="7" height="9.5" fill="none" stroke="#c2c2c2" stroke-width="1.7"><path d="M5.9 .8 L.9 4.75 L5.9 8.7"/></svg><svg class="a" style="left:1667.3px;top:952.75px" width="7" height="9.5" fill="none" stroke="#c2c2c2" stroke-width="1.7"><path d="M.9 .8 L5.9 4.75 L.9 8.7"/></svg><div class="a" style="left:1681px;top:948.3px;width:7px;height:18.5px;background:#a9a9a9;"></div><div class="a" style="left:1720px;top:138px;width:200px;height:28px;background:linear-gradient(#50638a,#465a82 40%,#3b4e76);border-top-left-radius:5px;"></div><div class="t" style="left:1725px;top:142.7px;height:21px;color:#fff"><span style="font-size:15px;">部件选择</span></div><svg class="a" style="left:1879.5px;top:146px" width="10" height="15" fill="none" stroke="#fff" stroke-width="1.25"><path d="M2.9 1h4.2v7H2.9zM.9 8.3h8.2M5 8.5v5.6"/><path d="M6.4 1.2v6.6" stroke-width="1.6"/></svg><svg class="a" style="left:1901.5px;top:147.5px" width="11" height="11" stroke="#fff" stroke-width="1.5"><path d="M1.5 1.5l8 8M9.5 1.5l-8 8"/></svg><div class="a" style="left:1720px;top:166px;width:200px;height:390px;background:#bdc9dd;box-shadow:inset 2px 0 #8f9db9"></div><div class="a" style="left:1725.5px;top:169px;width:196px;height:28px;background:#fff;border:1px solid #97a3b9;box-sizing:border-box"></div><div class="t" style="left:1730px;top:173.5px;height:21px;color:#6a6a6a"><span style="font-size:15px;letter-spacing:-0.5px;">(</span><span style="font-size:15px;">部件搜索</span><span style="font-size:15px;letter-spacing:-0.5px;">)</span></div><svg class="a" style="left:1727px;top:201px" width="24" height="22" viewBox="0 0 24 22"><rect x="7.3" y="0.5" width="4.06" height="5.22" fill="#7f8089"/><rect x="17.16" y="0.5" width="4.06" height="5.22" fill="#7f8089"/><rect x="6" y="4.85" width="6.82" height="10.88" fill="#7f8089" rx="0.6"/><rect x="15.86" y="4.85" width="6.82" height="10.88" fill="#7f8089" rx="0.6"/><rect x="12.09" y="5.72" width="4.64" height="4.06" fill="#7f8089"/><rect x="7.74" y="6.3" width="1.3" height="7.97" fill="#e3e4ea"/><rect x="17.6" y="6.3" width="1.3" height="7.97" fill="#e3e4ea"/><rect x="8" y="9.5" width="3.2" height="4" fill="#e3e4ea"/><rect x="17.5" y="9.5" width="3.2" height="4" fill="#e3e4ea"/><path d="M1 15.5l6.5-5.5v3.2h6v4.6h-6V21z" fill="#a3a5ae" stroke="#7f8089" stroke-width="0.6"/></svg><svg class="a" style="left:1755px;top:201px" width="24" height="22" viewBox="0 0 24 22"><rect x="7.3" y="0.5" width="4.06" height="5.22" fill="#7f8089"/><rect x="17.16" y="0.5" width="4.06" height="5.22" fill="#7f8089"/><rect x="6" y="4.85" width="6.82" height="10.88" fill="#7f8089" rx="0.6"/><rect x="15.86" y="4.85" width="6.82" height="10.88" fill="#7f8089" rx="0.6"/><rect x="12.09" y="5.72" width="4.64" height="4.06" fill="#7f8089"/><rect x="7.74" y="6.3" width="1.3" height="7.97" fill="#e3e4ea"/><rect x="17.6" y="6.3" width="1.3" height="7.97" fill="#e3e4ea"/><rect x="8" y="9.5" width="3.2" height="4" fill="#e3e4ea"/><rect x="17.5" y="9.5" width="3.2" height="4" fill="#e3e4ea"/><path d="M23 15.5l-6.5-5.5v3.2h-6v4.6h6V21z" fill="#a3a5ae" stroke="#7f8089" stroke-width="0.6"/></svg><svg class="a" style="left:1785px;top:201px" width="22" height="22" viewBox="0 0 22 22"><rect x="1.62" y="1.5" width="5.04" height="6.48" fill="#7f8089"/><rect x="13.86" y="1.5" width="5.04" height="6.48" fill="#7f8089"/><rect x="0" y="6.9" width="8.46" height="13.5" fill="#7f8089" rx="0.6"/><rect x="12.24" y="6.9" width="8.46" height="13.5" fill="#7f8089" rx="0.6"/><rect x="7.56" y="7.98" width="5.76" height="5.04" fill="#7f8089"/><rect x="2.16" y="8.7" width="1.62" height="9.9" fill="#e3e4ea"/><rect x="14.4" y="8.7" width="1.62" height="9.9" fill="#e3e4ea"/><rect x="2.5" y="12" width="3.6" height="5" fill="#e3e4ea"/><rect x="14.5" y="12" width="3.6" height="5" fill="#e3e4ea"/></svg><svg class="a" style="left:1820px;top:201px" width="23" height="22" viewBox="0 0 23 22"><circle cx="7.5" cy="7.5" r="6" fill="#a3a5ae"/><rect x="7" y="7" width="15" height="14" fill="#e3e4ea" stroke="#7f8089" stroke-width="1.1"/><path d="M7 11.7h15M7 16.3h15M12 7v14" fill="none" stroke="#7f8089" stroke-width="1.1"/><rect x="13" y="8.3" width="8" height="2.4" fill="#a3a5ae"/><path d="M14 4.2h7M17.5 .8v6.8" fill="none" stroke="#7f8089" stroke-width="2.4"/></svg><svg class="a" style="left:1731px;top:237px" width="25" height="22" viewBox="0 0 25 22"><rect x="1" y="1" width="15.5" height="13" fill="#e3e4ea" stroke="#a3a5ae" stroke-width="1.2"/><path d="M4.5 1v13M8.5 1v13M12.5 1v13M1 5h15.5M1 9.5h15.5" fill="none" stroke="#c6c8d1" stroke-width="0.9"/><path d="M10.5 10v10.5M5.5 15.2h10" fill="none" stroke="#7f8089" stroke-width="2.6"/><path d="M18 10h5.5l-2.7 3z" fill="#9a8a78"/></svg><svg class="a" style="left:1767px;top:237px" width="20" height="22" viewBox="0 0 20 22"><rect x="1" y="1" width="15.5" height="13" fill="#e3e4ea" stroke="#a3a5ae" stroke-width="1.2"/><path d="M4.5 1v13M8.5 1v13M12.5 1v13M1 5h15.5M1 9.5h15.5" fill="none" stroke="#c6c8d1" stroke-width="0.9"/><path d="M6 9.5l12 10.5M18 9.5L6 20" fill="none" stroke="#4e4e55" stroke-width="2.6"/></svg><svg class="a" style="left:1800px;top:237px" width="24" height="22" viewBox="0 0 24 22"><rect x="7" y="1" width="12" height="8" fill="#c6c8d1" stroke="#7f8089" stroke-width="1"/><rect x="1.5" y="5" width="13" height="13" fill="#e3e4ea" stroke="#7f8089" stroke-width="1"/><rect x="9" y="7.5" width="13.5" height="10.5" fill="#a3a5ae" stroke="#7f8089" stroke-width="1"/><rect x="4.5" y="12.5" width="13.5" height="8.5" fill="#c6c8d1" stroke="#7f8089" stroke-width="1"/><rect x="7.5" y="15" width="3" height="5.5" fill="#e3e4ea"/><rect x="16" y="4" width="6" height="1.6" fill="#7f8089"/></svg><svg class="a" style="left:1727px;top:272px" width="24" height="23" viewBox="0 0 24 23"><path d="M12 1.5l3.2 7 7.5.8-5.6 5 1.7 7.5L12 18l-6.8 3.8 1.7-7.5-5.6-5 7.5-.8z" fill="#a3a5ae" stroke="#7f8089" stroke-width="1.8"/><path d="M12 6l1.8 4.2 4.2.4-3.2 2.8 1 4.2L12 15.4z" fill="#c6c8d1"/></svg><svg class="a" style="left:1755px;top:272px" width="24" height="23" viewBox="0 0 24 23"><path d="M2 8h20v14H2z" fill="#c6c8d1" stroke="#7f8089" stroke-width="1.3"/><path d="M2 8V6h8l2 2" fill="#a3a5ae" stroke="#7f8089" stroke-width="1.1"/><rect x="2.6" y="19.5" width="18.8" height="2" fill="#a3a5ae"/><path d="M2 5.5h7M5.5 2v7M3 3l5 5M8 3L3 8" fill="none" stroke="#e3e4ea" stroke-width="1.3"/></svg><svg class="a" style="left:1785px;top:272px" width="19" height="23" viewBox="0 0 19 23"><path d="M2 2l15 18M17 2L2 20" fill="none" stroke="#7f8089" stroke-width="3"/><path d="M2 2l15 18M17 2L2 20" fill="none" stroke="#c6c8d1" stroke-width="0.8"/></svg><svg class="a" style="left:1820px;top:272px" width="28" height="23" viewBox="0 0 28 23"><path d="M2 7h20v15H2z" fill="#c6c8d1" stroke="#7f8089" stroke-width="1.3"/><path d="M2 7V5h7l2 2" fill="#a3a5ae" stroke="#7f8089" stroke-width="1.1"/><rect x="2.6" y="19.6" width="18.8" height="1.8" fill="#a3a5ae"/><path d="M6 11.5h11v2.5h-3v6.5h-2.2V14H9.5v6.5H7.3V14H6z" fill="#7f8089"/><path d="M23 10.5h5l-2.5 3z" fill="#9a8a78"/></svg><div class="a" style="left:1728.5px;top:230px;width:192px;height:1px;background:#a5b1c8;"></div><div class="a" style="left:1728.5px;top:231px;width:192px;height:1.2px;background:#f2f5fa;"></div><div class="a" style="left:1728.5px;top:266px;width:192px;height:1px;background:#a5b1c8;"></div><div class="a" style="left:1728.5px;top:267px;width:192px;height:1.2px;background:#f2f5fa;"></div><div class="a" style="left:1812px;top:201px;width:1px;height:21px;background:#8f9db8;"></div><div class="a" style="left:1813px;top:201px;width:1px;height:21px;background:#d6deeb;"></div><div class="a" style="left:1793px;top:237px;width:1px;height:21px;background:#8f9db8;"></div><div class="a" style="left:1794px;top:237px;width:1px;height:21px;background:#d6deeb;"></div><div class="a" style="left:1812px;top:273px;width:1px;height:21px;background:#8f9db8;"></div><div class="a" style="left:1813px;top:273px;width:1px;height:21px;background:#d6deeb;"></div><div class="a" style="left:1722px;top:302px;width:196px;height:222px;background:#f0f0f0;border:1px solid #3a62b4;border-right:2px solid #2a6ae0;box-sizing:border-box;box-shadow:inset 1px 1px #f9c47c"></div><div class="t" style="left:1734px;top:308px;height:21px;color:#000"><span style="font-size:15px;">显示对象</span><span style="font-size:15px;letter-spacing:-0.17px;">:</span></div><div class="a" style="left:1886.5px;top:305.5px;width:29px;height:25px;background:#e1e1e1;border:1px solid #adadad;box-sizing:border-box"></div><svg class="a" style="left:1900.5px;top:316px" width="10" height="6" fill="none" stroke="#4a4a4a" stroke-width="1.2"><path d="M.8 .9 L5.0 4.9 L9.2 .9"/></svg><div class="a" style="left:1725px;top:331.5px;width:191px;height:159px;background:#d6e8ff;border:1px solid #4a78c8;box-sizing:border-box"></div><div class="a" style="left:1726px;top:332.5px;width:168px;height:157px;overflow:hidden"><div class="a" style="left:0px;top:24.2px;width:168px;height:1.2px;background:#2b4a86;"></div><div class="t" style="left:3px;top:1px;height:21px;color:#263a63"><span style="font-size:15px;font-weight:bold;">顺序指令</span></div><div class="a" style="left:0px;top:49.2px;width:168px;height:1.2px;background:#2b4a86;"></div><div class="t" style="left:19px;top:26px;height:21px;color:#263a63"><span style="font-size:15px;font-weight:bold;">触点指令</span></div><div class="a" style="left:0px;top:74.2px;width:168px;height:1.2px;background:#2b4a86;"></div><div class="t" style="left:19px;top:51px;height:21px;color:#263a63"><span style="font-size:15px;font-weight:bold;">合并指令</span></div><div class="a" style="left:0px;top:99.2px;width:168px;height:1.2px;background:#2b4a86;"></div><div class="t" style="left:19px;top:76px;height:21px;color:#263a63"><span style="font-size:15px;font-weight:bold;">输出指令</span></div><div class="a" style="left:0px;top:124.2px;width:168px;height:1.2px;background:#2b4a86;"></div><div class="t" style="left:19px;top:101px;height:21px;color:#263a63"><span style="font-size:15px;font-weight:bold;">移位指令</span></div><div class="a" style="left:0px;top:149.2px;width:168px;height:1.2px;background:#2b4a86;"></div><div class="t" style="left:19px;top:126px;height:21px;color:#263a63"><span style="font-size:15px;font-weight:bold;">主控指令</span></div><div class="a" style="left:0px;top:174.2px;width:168px;height:1.2px;background:#2b4a86;"></div><div class="t" style="left:19px;top:151px;height:21px;color:#263a63"><span style="font-size:15px;font-weight:bold;">结束指令</span></div></div><div class="a" style="left:1894px;top:332.5px;width:21px;height:157px;background:#f0f0f0;"></div><div class="a" style="left:1895px;top:354.5px;width:19px;height:20.5px;background:#c9c9c9;"></div><svg class="a" style="left:1899.75px;top:341.1px" width="9.5" height="6.8" fill="none" stroke="#505050" stroke-width="2.1"><path d="M.8 5.7 L4.75 .9 L8.7 5.7"/></svg><svg class="a" style="left:1899.75px;top:476.6px" width="9.5" height="6.8" fill="none" stroke="#505050" stroke-width="2.1"><path d="M.8 .9 L4.75 5.7 L8.7 .9"/></svg><div class="a" style="left:1725px;top:491px;width:191px;height:4px;background:#24427c;"></div><div class="a" style="left:1725px;top:495px;width:191px;height:28px;background:#d6e8ff;border:1px solid #4a78c8;border-top:none;box-sizing:border-box"></div><div class="a" style="left:1723px;top:525.5px;width:41.5px;height:26.5px;background:linear-gradient(#fde3b0,#fbcf86);border:1px solid #d59a3a;border-top:none;box-sizing:border-box;border-radius:0 0 3px 3px"></div><div class="t" style="left:1743.75px;top:528px;height:21px;color:#000;width:0;justify-content:center"><span style="font-size:15px;">部</span><span style="font-size:15px;">...</span></div><div class="a" style="left:1764.5px;top:525.5px;width:38.5px;height:26.5px;background:linear-gradient(#e8f1fd,#cfe0fa);border:1px solid #5c82c6;border-top:none;box-sizing:border-box;border-radius:0 0 3px 3px"></div><div class="t" style="left:1783.75px;top:528px;height:21px;color:#000;width:0;justify-content:center"><span style="font-size:15px;">收</span><span style="font-size:15px;">..</span></div><div class="a" style="left:1803px;top:525.5px;width:38.5px;height:26.5px;background:linear-gradient(#e8f1fd,#cfe0fa);border:1px solid #5c82c6;border-top:none;box-sizing:border-box;border-radius:0 0 3px 3px"></div><div class="t" style="left:1822.25px;top:528px;height:21px;color:#000;width:0;justify-content:center"><span style="font-size:15px;">履</span><span style="font-size:15px;">..</span></div><div class="a" style="left:1841.5px;top:525.5px;width:38.5px;height:26.5px;background:linear-gradient(#e8f1fd,#cfe0fa);border:1px solid #5c82c6;border-top:none;box-sizing:border-box;border-radius:0 0 3px 3px"></div><div class="t" style="left:1860.75px;top:528px;height:21px;color:#000;width:0;justify-content:center"><span style="font-size:15px;">模</span><span style="font-size:15px;">..</span></div><div class="a" style="left:1880px;top:525.5px;width:32.5px;height:26.5px;background:linear-gradient(#e8f1fd,#cfe0fa);border:1px solid #5c82c6;border-top:none;box-sizing:border-box;border-radius:0 0 3px 3px"></div><div class="t" style="left:1896.25px;top:528px;height:21px;color:#000;width:0;justify-content:center"><span style="font-size:15px;">库</span></div><div class="a" style="left:1716px;top:556px;width:204px;height:6px;background:#2b3c5e;"></div><div class="a" style="left:1720px;top:560px;width:200px;height:28px;background:linear-gradient(#50638a,#465a82 40%,#3b4e76);border-top-left-radius:5px;"></div><div class="t" style="left:1725px;top:564.7px;height:21px;color:#fff"><span style="font-size:15px;">配置详细信息输入</span></div><svg class="a" style="left:1879.5px;top:568px" width="10" height="15" fill="none" stroke="#fff" stroke-width="1.25"><path d="M2.9 1h4.2v7H2.9zM.9 8.3h8.2M5 8.5v5.6"/><path d="M6.4 1.2v6.6" stroke-width="1.6"/></svg><svg class="a" style="left:1901.5px;top:569.5px" width="11" height="11" stroke="#fff" stroke-width="1.5"><path d="M1.5 1.5l8 8M9.5 1.5l-8 8"/></svg><div class="a" style="left:1720px;top:588px;width:200px;height:388px;background:#bdc9dd;box-shadow:inset 2px 0 #8f9db9"></div><div class="a" style="left:1722.5px;top:590px;width:195.5px;height:308px;background:#34496b;border:1px solid #8aa6da;box-sizing:border-box"></div><div class="a" style="left:1722.5px;top:898px;width:195.5px;height:4px;background:#7ea6ec;"></div><div class="a" style="left:1722.5px;top:902px;width:195.5px;height:72.5px;background:#d6e8ff;border:1.5px solid #6a98e6;box-sizing:border-box"></div></body></html>
